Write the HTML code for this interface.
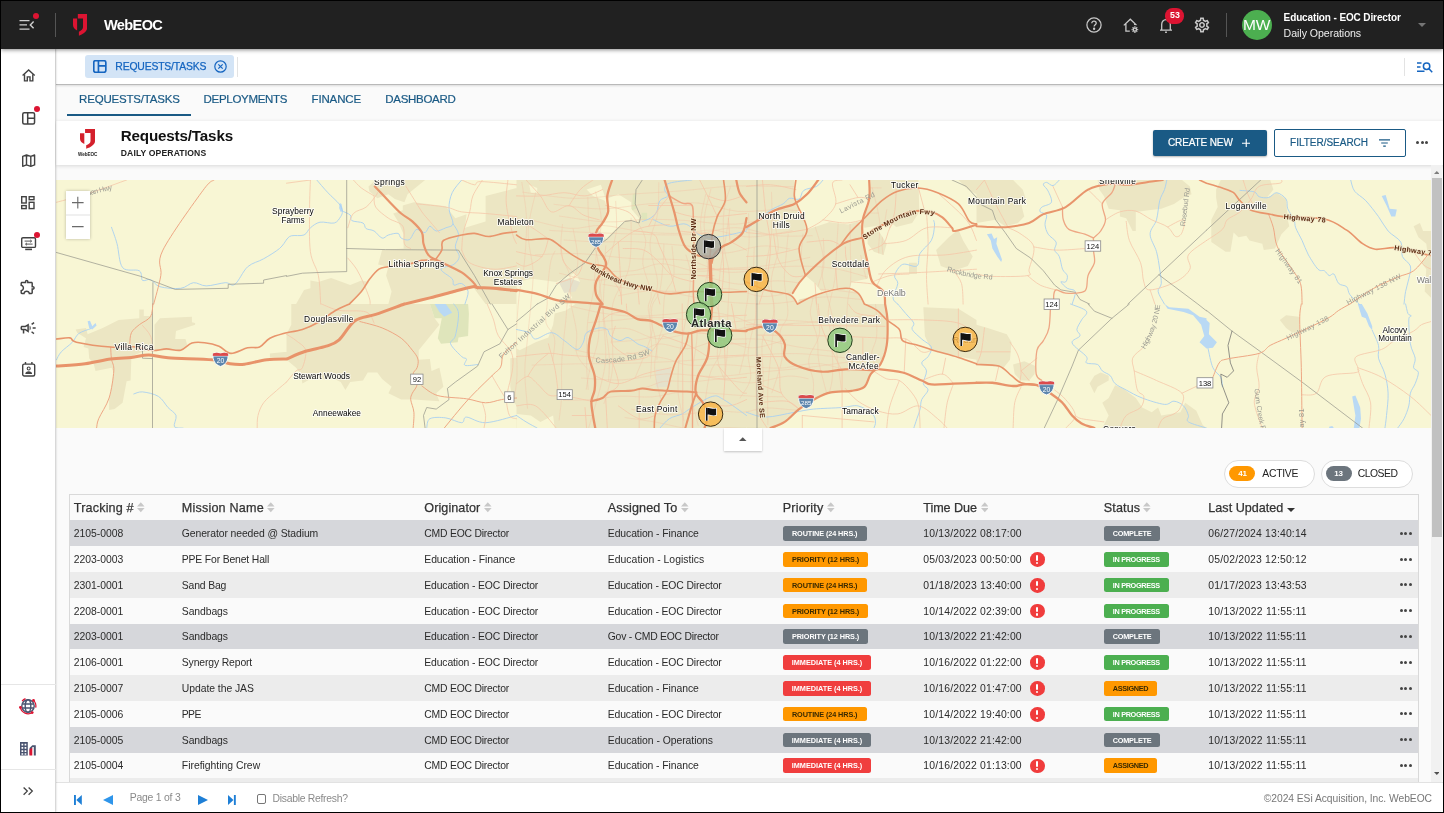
<!DOCTYPE html>
<html lang="en">
<head>
<meta charset="utf-8">
<title>WebEOC - Requests/Tasks</title>
<style>
*{box-sizing:border-box;margin:0;padding:0}
html,body{width:1444px;height:813px;overflow:hidden;background:#000;font-family:"Liberation Sans",sans-serif;}
#app{position:absolute;left:1px;top:1px;width:1442px;height:811px;background:#fafafa;overflow:hidden;will-change:transform}
.abs{position:absolute}
/* top bar */
#topbar{position:absolute;left:0;top:0;width:1442px;height:47.5px;background:#212121;z-index:20;box-shadow:0 1px 4px rgba(0,0,0,.45)}
#topbar .brand{position:absolute;left:103px;top:13.5px;font-size:14.6px;line-height:20px;color:#fff;font-weight:bold;letter-spacing:-0.66px;white-space:nowrap}
#topbar .vdiv{position:absolute;width:1px;background:#555;}
#avatar{position:absolute;left:1240.5px;top:8.5px;width:30px;height:30px;border-radius:50%;background:#4caf50;color:#fff;font-size:15.5px;line-height:30px;text-align:center;letter-spacing:-0.3px}
#uname{position:absolute;left:1282.6px;top:10.2px;letter-spacing:-0.12px;font-size:10px;line-height:14px;font-weight:bold;color:#fff;white-space:nowrap}
#urole{position:absolute;left:1282.6px;top:25px;letter-spacing:-0.05px;font-size:10.6px;line-height:14px;color:#eee;white-space:nowrap}
#nbadge{position:absolute;left:1164.3px;top:7.4px;width:19.2px;height:15.2px;border-radius:7.6px;background:#dc1432;color:#fff;font-size:8.8px;font-weight:bold;line-height:15.4px;text-align:center}
/* sidebar */
#sidebar{position:absolute;left:0;top:47px;width:54.2px;height:764px;background:#fff;z-index:10;box-shadow:1px 0 2px rgba(0,0,0,.2)}
#sidebar svg{position:absolute;overflow:visible}
.rdot{position:absolute;width:6px;height:6px;border-radius:50%;background:#dc1432}
.shr{position:absolute;left:0;width:54.5px;height:1px;background:#e6e6e6}
/* tab bar */
#tabbar{position:absolute;left:54.5px;top:47px;width:1388px;height:36.8px;background:#fff;border-bottom:1px solid #b9b9b9;z-index:5;box-shadow:0 1px 2px rgba(0,0,0,.12)}
#chip{position:absolute;left:29.8px;top:6.8px;width:148.7px;height:23px;border-radius:3px;background:#d3e4f6}
#chip .t{position:absolute;left:30px;top:5px;font-size:10.4px;line-height:14px;color:#1565c0;white-space:nowrap;letter-spacing:-0.17px;-webkit-text-stroke:.25px #1565c0}
/* subnav */
#subnav{position:absolute;left:54.5px;top:84px;width:1388px;height:36px;background:#fafafa}
#subnav .tab{position:absolute;top:6px;font-size:11.5px;line-height:16px;color:#1a5a85;white-space:nowrap;-webkit-text-stroke:.2px #1a5a85}
#subnav .ul{position:absolute;left:11.3px;top:29.2px;width:124px;height:1.4px;background:#1a5a85}
/* header card */
#hcard{position:absolute;left:54.5px;top:120.3px;width:1388px;height:43.5px;background:#fff;box-shadow:0 1px 4px rgba(0,0,0,.14);z-index:3}
#hcard .title{position:absolute;left:65.2px;top:4.5px;font-size:15.2px;line-height:20px;font-weight:bold;color:#111;white-space:nowrap;letter-spacing:-0.16px}
#hcard .sub{position:absolute;left:65.2px;top:25.8px;font-size:8.6px;line-height:12px;font-weight:bold;color:#222;white-space:nowrap;letter-spacing:.14px}
#btnNew{position:absolute;left:1097.5px;top:8.7px;width:114px;height:26px;border-radius:2px;background:#1a5a85;color:#fff;box-shadow:0 1px 2px rgba(0,0,0,.3)}
#btnNew .t,#btnFil .t{position:absolute;left:15px;top:6px;font-size:10px;line-height:14px;white-space:nowrap;letter-spacing:-0.12px}
#btnNew .t{-webkit-text-stroke:.2px #fff}
#btnFil{position:absolute;left:1218.6px;top:7.7px;width:132px;height:27.8px;border-radius:2px;background:#fff;border:1px solid #1a5a85;color:#1a5a85}
#btnFil .t{left:15px;top:6.3px;letter-spacing:-0.02px;-webkit-text-stroke:.2px #1a5a85}
/* content */
#content{position:absolute;left:54.5px;top:164px;width:1376px;height:617px;background:#fafafa}
#map{position:absolute;left:54.5px;top:179px;width:1375.5px;height:248px;background:#f9f7d4;overflow:hidden}
#zoomctl{position:absolute;left:65.2px;top:190px;width:24px;height:48px;background:#fff;box-shadow:0 0 3px rgba(0,0,0,.25);z-index:4}
#collapse{position:absolute;left:723px;top:427px;width:37.8px;height:22.5px;background:#fff;box-shadow:0 1px 2px rgba(0,0,0,.22);z-index:4}
.pill{position:absolute;top:459px;height:28px;border-radius:14px;background:#fff;border:1px solid #ddd}
.pill .n{position:absolute;left:4px;top:5.1px;width:26px;height:15px;border-radius:7.5px;color:#fff;font-size:8px;font-weight:bold;letter-spacing:-.2px;line-height:15.4px;text-align:center}
.pill .t{position:absolute;left:36.5px;top:5.5px;font-size:10.4px;line-height:14px;color:#222;white-space:nowrap}
/* table */
#tbl{position:absolute;left:67.8px;top:493.2px;width:1350.7px;height:290px;border:1px solid #d9d9d9;border-bottom:none;background:#fafafa}
.th{position:absolute;top:4.7px;font-size:12.6px;line-height:16px;color:#333;white-space:nowrap;-webkit-text-stroke:.25px #333}
.sort{position:absolute;top:7.3px;width:7.6px;height:10.6px}
.row{position:absolute;left:0;width:1348.7px;height:25.8px;font-size:10.4px;line-height:25.8px;color:#2b2b2b}
.row span{position:absolute;top:.8px;white-space:nowrap}
.r-d{background:#d6d7db}.r-w{background:#fafafa}.r-g{background:#ececec}
.c1{left:4px}.c2{left:112px}.c3{left:354.5px}.c4{left:538px}.c6{left:853.5px}.c8{left:1138.5px}
.bdg{position:absolute;top:5.8px;height:14.7px;border-radius:2.5px;font-size:7.3px;line-height:15.7px;font-weight:bold;text-align:center;white-space:nowrap;letter-spacing:-0.1px}
.p{left:713px}.s{left:1034px}
.gy{background:#6c757d;color:#fff}.or{background:#ff9800;color:#3a2a00}.rd{background:#f03e3e;color:#fff}.gn{background:#4caf50;color:#fff}
.al{position:absolute;left:960.2px;top:6px;width:14.6px;height:14.6px;border-radius:50%;background:#f03c3c}
.al:before{content:"";position:absolute;left:6.3px;top:2.8px;width:2px;height:5.6px;background:#fff;border-radius:1px}
.al:after{content:"";position:absolute;left:6.2px;top:9.6px;width:2.2px;height:2.2px;background:#fff;border-radius:50%}
.dots{position:absolute;left:1330px;top:11.4px;width:13px;height:3px}
.dots i,.dots:before,.dots:after{content:"";position:absolute;top:0;width:3px;height:3px;border-radius:50%;background:#444}
.dots:before{left:0}.dots i{left:4.6px}.dots:after{left:9.2px}
/* scrollbar */
#sb{position:absolute;left:1430px;top:164px;width:11.300px;height:617px;background:#f1f1f1;z-index:4}
#sb .thumb{position:absolute;left:.5px;top:13px;width:10.3px;height:359px;background:#c1c1c1}
/* footer */
#footer{position:absolute;left:54.5px;top:781px;width:1388px;height:30px;background:#fff;border-top:1px solid #e2e2e2;z-index:6}
#footer .pg{position:absolute;left:74.2px;top:8px;letter-spacing:-0.21px;font-size:10.4px;line-height:14px;color:#8a8a8a;white-space:nowrap}
#footer .dr{position:absolute;left:217.1px;top:8.9px;letter-spacing:-0.29px;font-size:10.4px;line-height:14px;color:#8a8a8a;white-space:nowrap}
#footer .cb{position:absolute;left:201px;top:11px;width:9.5px;height:9.5px;border:1px solid #767676;border-radius:2px;background:#fff}
#footer .cp{position:absolute;right:11.5px;top:9px;letter-spacing:-0.05px;font-size:10.3px;line-height:14px;color:#777;white-space:nowrap}
</style>
</head>
<body>
<div id="app">

<!-- TOPBAR -->
<div id="topbar">
  <svg class="abs" style="left:18px;top:18px" width="16" height="12" viewBox="0 0 16 12" fill="none" stroke="#d0d0d0" stroke-width="1.3"><path d="M0.5 1.6h10M0.5 5.9h7.5M0.5 10.2h10"/><path d="M14.6 2.6L11.3 5.9l3.3 3.3" stroke-width="1.4"/></svg>
  <div class="rdot" style="left:31.5px;top:12px;width:6.4px;height:6.4px"></div>
  <div class="vdiv" style="left:54px;top:12px;height:24px"></div>
  <svg class="abs" style="left:72px;top:13px" width="14.3" height="22" preserveAspectRatio="none" viewBox="0 0 16 23"><path d="M5.4 0H16v14.2c0 3.6-4.2 6.9-9.4 8.6V18.6c2.7-1 4.6-2.6 4.6-4.9V4.6H5.4z" fill="#dc1432"/><path d="M0 4.8h4.6v12.4C2 16.1 0 14.2 0 11.6z" fill="#dc1432"/></svg>
  <div class="brand">WebEOC</div>
  <!-- help -->
  <svg class="abs" style="left:1084.5px;top:16px" width="16" height="16" viewBox="0 0 16 16" fill="none" stroke="#c8c8c8" stroke-width="1.25"><circle cx="8" cy="8" r="7.1"/><path d="M5.8 6.3c0-1.3 1-2.1 2.2-2.1s2.2.8 2.2 2c0 1.5-2.1 1.7-2.1 3.4" stroke-width="1.3"/><circle cx="8.1" cy="11.7" r=".55" fill="#c8c8c8"/></svg>
  <!-- home gear -->
  <svg class="abs" style="left:1122px;top:16.500px" width="17" height="16" viewBox="0 0 17 16" fill="none" stroke="#c8c8c8" stroke-width="1.300"><path d="M.8 7.400L7.300 1.200l6.200 5.900M2.900 5.700V13.200H6.800M11.700 5.600V7"/><circle cx="11.900" cy="11.600" r="1.700" stroke-width="1.500"/><path d="M11.900 8.300v1M11.900 13.900v1M8.600 11.600h1M14.200 11.600h1M9.600 9.300l.7.700M13.500 13.200l.7.700M14.200 9.300l-.7.700M10.300 13.200l-.7.700" stroke-width="1.300"/></svg>
  <!-- bell -->
  <svg class="abs" style="left:1158px;top:15.5px" width="14" height="17" viewBox="0 0 14 17" fill="none" stroke="#c8c8c8" stroke-width="1.3"><path d="M1 13.2h12M2.7 13V7.4C2.7 4.6 4.5 2.6 7 2.6s4.3 2 4.3 4.8V13"/><path d="M6.1 15.3h1.8" stroke-width="1.6"/></svg>
  <div id="nbadge">53</div>
  <!-- gear -->
  <svg class="abs" style="left:1192px;top:15px" width="18" height="18" viewBox="0 0 24 24" fill="#c8c8c8"><path d="M19.43 12.98c.04-.32.07-.64.07-.98 0-.34-.03-.66-.07-.98l2.11-1.65c.19-.15.24-.42.12-.64l-2-3.46c-.09-.16-.26-.25-.44-.25-.06 0-.12.01-.17.03l-2.49 1c-.52-.4-1.08-.73-1.69-.98l-.38-2.65C14.46 2.18 14.25 2 14 2h-4c-.25 0-.46.18-.49.42l-.38 2.65c-.61.25-1.17.59-1.69.98l-2.49-1c-.06-.02-.12-.03-.18-.03-.17 0-.34.09-.43.25l-2 3.46c-.13.22-.07.49.12.64l2.11 1.65c-.04.32-.07.65-.07.98 0 .33.03.66.07.98l-2.11 1.65c-.19.15-.24.42-.12.64l2 3.46c.09.16.26.25.44.25.06 0 .12-.01.17-.03l2.49-1c.52.4 1.08.73 1.69.98l.38 2.65c.03.24.24.42.49.42h4c.25 0 .46-.18.49-.42l.38-2.65c.61-.25 1.17-.59 1.69-.98l2.49 1c.06.02.12.03.18.03.17 0 .34-.09.43-.25l2-3.46c.12-.22.07-.49-.12-.64l-2.11-1.65zm-1.98-1.71c.04.31.05.52.05.73 0 .21-.02.43-.05.73l-.14 1.13.89.7 1.08.84-.7 1.21-1.27-.51-1.04-.42-.9.68c-.43.32-.84.56-1.25.73l-1.06.43-.16 1.13-.2 1.35h-1.4l-.19-1.35-.16-1.13-1.06-.43c-.43-.18-.83-.41-1.23-.71l-.91-.7-1.06.43-1.27.51-.7-1.21 1.08-.84.89-.7-.14-1.13c-.03-.31-.05-.54-.05-.74s.02-.43.05-.73l.14-1.13-.89-.7-1.08-.84.7-1.21 1.27.51 1.04.42.9-.68c.43-.32.84-.56 1.25-.73l1.06-.43.16-1.13.2-1.35h1.39l.19 1.35.16 1.13 1.06.43c.43.18.83.41 1.23.71l.91.7 1.06-.43 1.27-.51.7 1.21-1.07.85-.89.7.14 1.13zM12 8c-2.21 0-4 1.79-4 4s1.790 4 4 4 4-1.790 4-4-1.790-4-4-4zm0 6c-1.100 0-2-.9-2-2s.9-2 2-2 2 .9 2 2-.9 2-2 2z"/></svg>
  <div class="vdiv" style="left:1225px;top:12px;height:24px"></div>
  <div id="avatar">MW</div>
  <div id="uname">Education - EOC Director</div>
  <div id="urole">Daily Operations</div>
  <svg class="abs" style="left:1416.5px;top:22px" width="8" height="4" viewBox="0 0 8 4"><path d="M0 0h8L4 4z" fill="#757575"/></svg>
</div>

<!-- SIDEBAR -->
<div id="sidebar">
  <svg style="left:20.6px;top:21.4px" width="13.3" height="12.6" viewBox="0 0 13.3 12.6" fill="none" stroke="#424242" stroke-width="1.4" stroke-linejoin="miter"><path d="M.6 6.5L6.65 1l6.05 5.500"/><path d="M2.500 5.300V11.900H5.300V7.900H8V11.900H10.800V5.300"/></svg>
  <svg style="left:20.6px;top:63.9px" width="13.3" height="12.8" viewBox="0 0 13.3 12.8" fill="none" stroke="#424242" stroke-width="1.5"><rect x=".75" y=".75" width="11.800" height="11.300" rx="1.500"/><path d="M5.700 .75v11.300M5.700 6.200h6.800"/></svg>
  <div class="rdot" style="left:33.1px;top:57.9px"></div>
  <svg style="left:20.6px;top:105.6px" width="13.3" height="13.3" viewBox="0 0 13.3 13.3" fill="none" stroke="#424242" stroke-width="1.4" stroke-linejoin="round"><path d="M.7 2.400L4.500 1l4.300 1.400L12.600 1v9.900l-3.800 1.400-4.300-1.400L.7 12.300zM4.500 1v9.900M8.800 2.400v9.900"/></svg>
  <svg style="left:20.3px;top:147.6px" width="13.700" height="13.300" viewBox="0 0 13.700 13.300" fill="none" stroke="#424242" stroke-width="1.400"><rect x=".7" y=".7" width="4.500" height="6.300"/><rect x="8.200" y=".7" width="4.800" height="3"/><rect x=".7" y="9.600" width="4.500" height="3"/><rect x="8.200" y="6.300" width="4.800" height="6.300"/></svg>
  <svg style="left:19.5px;top:189.3px" width="15.200" height="13.300" viewBox="0 0 15.200 13.300" fill="none" stroke="#424242" stroke-width="1.400"><rect x=".7" y=".7" width="13.800" height="9.700" rx="1.200"/><path d="M4.200 12.400h6.800" stroke-width="1.600"/><path d="M3.600 4.100h7M9.300 2.900l1.300 1.200-1.300 1.200M11.600 7.100h-7M5.900 5.900L4.600 7.100l1.300 1.200" stroke-width=".9"/></svg>
  <div class="rdot" style="left:33.1px;top:184.100px"></div>
  <svg style="left:18.3px;top:229.600px" width="17.600" height="17.600" viewBox="0 0 24 24" fill="#424242"><path d="M10.500 4.500c.28 0 .5.22.5.5v2h6v6h2c.28 0 .5.22.5.5s-.22.5-.5.5h-2v6h-2.120c-.68-1.750-2.390-3-4.380-3s-3.700 1.250-4.380 3H4v-2.120c1.750-.68 3-2.390 3-4.380 0-1.990-1.240-3.700-2.990-4.380L4 7h6V5c0-.28.22-.5.5-.5m0-2C9.120 2.500 8 3.620 8 5H4c-1.100 0-1.990.9-1.990 2v3.800h.29c1.490 0 2.700 1.210 2.700 2.700s-1.210 2.700-2.700 2.700H2V20c0 1.100.9 2 2 2h3.800v-.3c0-1.490 1.210-2.700 2.700-2.700s2.700 1.210 2.700 2.700v.3H17c1.100 0 2-.9 2-2v-4c1.380 0 2.500-1.120 2.500-2.500S20.380 11 19 11V7c0-1.100-.9-2-2-2h-4c0-1.380-1.120-2.500-2.500-2.500z"/></svg>
  <svg style="left:18px;top:270.800px" width="18.200" height="18.200" viewBox="0 0 24 24" fill="#424242"><path d="M18 11v2h4v-2h-4zm-2 6.610c.96.71 2.210 1.650 3.200 2.390.4-.53.8-1.070 1.200-1.600-.99-.74-2.240-1.680-3.200-2.400-.4.54-.8 1.080-1.200 1.610zM20.400 5.600c-.4-.53-.8-1.070-1.200-1.600-.99.74-2.240 1.680-3.200 2.400.4.53.8 1.070 1.200 1.600.96-.72 2.210-1.650 3.200-2.400zM4 9c-1.100 0-2 .9-2 2v2c0 1.100.9 2 2 2h1v4h2v-4h1l5 3V6L8 9H4zm5.030 1.710L11 9.530v4.940l-1.970-1.180-.48-.29H4v-2h4.550l.48-.29zM15.500 12c0-1.330-.58-2.530-1.500-3.350v6.690c.92-.81 1.500-2.010 1.500-3.340z"/></svg>
  <svg style="left:20.6px;top:314.100px" width="13.400" height="14.700" viewBox="0 0 13.400 14.700" fill="none" stroke="#424242" stroke-width="1.400"><rect x=".7" y="2.100" width="12" height="11.900" rx="1.500"/><path d="M3.500 0v2.100M9.900 0v2.100"/><circle cx="6.700" cy="6.500" r="1.500" stroke-width="1.100"/><path d="M3.300 11.900c0-1.900 1.500-2.700 3.400-2.700s3.400.8 3.400 2.700z" fill="#424242" stroke="none"/></svg>
  <div class="shr" style="top:636.300px"></div>
  <svg style="left:17.800px;top:648.700px" width="18" height="18" viewBox="0 0 18 18" fill="none" stroke="#4a5470" stroke-width="1.400"><circle cx="9" cy="9" r="6.200"/><ellipse cx="9" cy="9" rx="2.800" ry="6.200"/><path d="M3.200 7h11.600M3.200 11h11.600"/><path d="M1.400 10.400A7.800 7.800 0 0 0 13.400 15.400" stroke="#dc1432" stroke-width="1.200"/><path d="M14.500 3.400A7.800 7.800 0 0 1 16.700 10.600" stroke="#dc1432" stroke-width="1.200"/><path d="M3.100 4.100A7.800 7.800 0 0 1 6.500 1.600" stroke="#dc1432" stroke-width="1.200"/><circle cx="1.400" cy="10.400" r="1.400" fill="#dc1432" stroke="none"/><circle cx="14.500" cy="3.400" r="1.400" fill="#dc1432" stroke="none"/><circle cx="13.200" cy="15.600" r="1.400" fill="#dc1432" stroke="none"/></svg>
  <svg style="left:19.100px;top:693.700px" width="16" height="13.500" viewBox="0 0 16 13.500"><rect x="0" y="0" width="7.800" height="13.500" fill="#4a5470"/><path d="M1.500 1.800h1.700v1.700H1.500zM4.600 1.800h1.700v1.700H4.600zM1.500 5h1.700v1.700H1.500zM4.600 5h1.700v1.700H4.600zM1.500 8.200h1.700v1.700H1.500zM4.600 8.200h1.700v1.700H4.600zM1.500 11.200h1.700v1.500H1.500zM4.600 11.200h1.700v1.500H4.600z" fill="#fff"/><path d="M9.500 13.500V6l2.800-2.800h3.500v10.300h-2V5h-1.300z" fill="#4a5470"/><path d="M9.500 7.400l2.800-1.700v7.800H9.500z" fill="#dc1432"/></svg>
  <div class="shr" style="top:721.200px"></div>
  <svg style="left:21.900px;top:739.100px" width="10.300" height="8.200" viewBox="0 0 10.300 8.200" fill="none" stroke="#424242" stroke-width="1.300"><path d="M.6 .5l3.700 3.600L.6 7.700M5.600 .5l3.700 3.600-3.700 3.600"/></svg>
</div>

<!-- TABBAR -->
<div id="tabbar">
  <div id="chip">
    <svg class="abs" style="left:7.8px;top:5px" width="13.6" height="13" viewBox="0 0 13 12.5" fill="none" stroke="#1565c0" stroke-width="1.6"><rect x=".7" y=".7" width="11.6" height="11.1" rx="1.6"/><path d="M5.2 .7v11.1M5.2 5.6h7.1"/></svg>
    <div class="t">REQUESTS/TASKS</div>
    <svg class="abs" style="left:128.8px;top:5px" width="13" height="13" viewBox="0 0 13 13" fill="none" stroke="#1565c0" stroke-width="1.2"><circle cx="6.5" cy="6.5" r="5.7"/><path d="M4.3 4.3l4.4 4.4M8.7 4.3L4.3 8.7"/></svg>
  </div>
  <div class="abs" style="left:181.5px;top:9px;width:1px;height:20px;background:#e3e3e3"></div>
  <div class="abs" style="left:1348px;top:10px;width:1px;height:18px;background:#e3e3e3"></div>
  <svg class="abs" style="left:1361.5px;top:13.6px" width="16" height="11" viewBox="0 0 16 11" fill="none" stroke="#1565c0" stroke-width="1.5"><path d="M0 1h4.5M0 5h3.5M0 9.2h7.5"/><circle cx="9.6" cy="4.3" r="3.2"/><path d="M12 6.8l3.2 3.4"/></svg>
</div>

<!-- SUBNAV -->
<div id="subnav">
  <div class="tab" style="left:23.6px;letter-spacing:-0.2px">REQUESTS/TASKS</div>
  <div class="tab" style="left:148px;letter-spacing:-0.29px">DEPLOYMENTS</div>
  <div class="tab" style="left:256px;letter-spacing:-0.14px">FINANCE</div>
  <div class="tab" style="left:329.8px;letter-spacing:-0.29px">DASHBOARD</div>
  <div class="ul"></div>
</div>

<!-- HEADER CARD -->
<div id="hcard">
  <svg class="abs" style="left:24.5px;top:8px" width="15" height="20" viewBox="0 0 16 23" preserveAspectRatio="none"><path d="M5.4 0H16v14.2c0 3.6-4.2 6.900-9.400 8.600V18.600c2.700-1 4.600-2.600 4.600-4.900V4.600H5.400z" fill="#d4202c"/><path d="M0 4.800h4.600v12.400C2 16.100 0 14.200 0 11.600z" fill="#d4202c"/></svg>
  <div class="abs" style="left:22.500px;top:31px;font-size:4.600px;line-height:6px;font-weight:bold;color:#222;letter-spacing:-0.050px">WebEOC</div>
  <div class="title">Requests/Tasks</div>
  <div class="sub">DAILY OPERATIONS</div>
  <div id="btnNew"><div class="t">CREATE NEW</div>
    <svg class="abs" style="left:88.500px;top:9px" width="8.500" height="8.500" viewBox="0 0 9 9" stroke="#fff" stroke-width="1.200"><path d="M4.500 0v9M0 4.500h9"/></svg></div>
  <div id="btnFil"><div class="t">FILTER/SEARCH</div>
    <svg class="abs" style="left:103.500px;top:9.500px" width="11" height="8" viewBox="0 0 11 8" stroke="#1a5a85" stroke-width="1.200"><path d="M0 .8h11M2.200 4h6.600M4.200 7.200h2.600"/></svg></div>
  <div class="abs" style="left:1360.5px;top:19.700px;width:12px;height:3px"><div class="dots" style="left:0;top:0"><i></i></div></div>
</div>

<!-- CONTENT -->
<div id="content"></div>
<div id="map"><svg width="1375.5" height="248" viewBox="55.5 180 1375.5 248" style="position:absolute;left:0;top:0;font-family:'Liberation Sans',sans-serif">
<rect x="55" y="179" width="1377" height="250" fill="#f8f6d4"/>
<path d="M75.1 329.5 L85.5 327.9 L87.1 334.3 L102.2 327.9 L118.1 319.9 L138.8 318.3 L138.8 309.6 L143.3 309.6 L143.3 315.9 L151.6 315.9 L151.6 350.2 L142.0 351.8 L130.9 356.6 L130.1 380.5 L126.1 381.3 L122.1 402.8 L114.1 409.1 L108.6 409.9 L108.6 399.6 L113.3 372.5 L111.0 367.7 L95.0 370.9 L93.4 364.5 L88.7 358.2 L87.9 348.6 L83.1 347.0 L85.5 338.2 L76.7 332.7Z M154.0 324.7 L159.5 318.3 L191.4 316.7 L191.4 322.3 L194.6 323.1 L194.6 324.7 L175.5 331.1 L174.7 339.0 L185.0 339.0 L186.6 344.6 L180.2 350.2 L154.0 350.2Z M269.4 353.4 L286.0 351.8 L286.0 357.4 L269.4 357.4Z M368.0 186.4 L375.2 180.0 L424.6 180.0 L407.1 194.3 L403.9 202.3 L394.3 199.1 L387.9 194.3 L376.8 198.3 L368.8 191.2Z M402.3 205.5 L413.4 202.3 L445.3 206.3 L454.8 218.2 L466.0 214.2 L464.4 227.8 L485.1 221.4 L485.1 195.9 L516.0 188.0 L516.0 304.1 L485.1 304.1 L472.4 286.7 L451.7 291.5 L429.4 297.9 L403.9 304.1 L387.9 304.1 L391.1 291.5 L385.6 275.6 L387.9 266.8 L377.6 264.4 L381.6 250.1 L403.1 248.5 L403.1 234.2 L397.5 221.4 L392.7 213.5 L402.3 210.3Z M295.6 304.1 L303.5 289.9 L309.9 288.3 L309.9 280.4 L317.9 281.9 L330.6 278.0 L349.7 285.1 L360.9 280.4 L368.8 281.9 L360.9 291.5 L348.9 304.1Z M290.8 304.0 L429.4 304.0 L434.1 318.3 L438.9 324.7 L418.2 350.2 L418.2 359.8 L429.4 359.0 L431.0 370.9 L438.9 367.7 L442.9 386.8 L435.7 393.2 L438.9 401.2 L413.4 399.6 L400.7 399.6 L387.9 393.2 L391.1 386.8 L381.6 378.9 L376.8 372.5 L367.2 372.5 L362.5 380.5 L349.7 382.1 L344.9 390.0 L340.2 382.1 L333.8 378.9 L309.9 378.9 L301.9 383.6 L300.3 374.1 L295.6 367.7 L286.0 359.8 L286.0 334.3 L290.8 324.7Z M509.8 358.2 L516.0 357.4 L516.0 405.9 L512.2 399.6 L509.8 386.8Z M516.0 180.0 L746.0 180.0 L746.0 304.1 L516.0 304.1Z M516.0 304.0 L746.0 304.0 L746.0 428.1 L516.0 428.1Z M746.0 180.0 L793.8 180.0 L795.4 200.7 L806.5 229.4 L798.6 248.5 L804.9 275.6 L790.6 293.1 L797.0 304.1 L746.0 304.1Z M806.5 229.4 L828.8 222.2 L847.9 224.6 L857.5 221.4 L862.3 227.8 L863.9 243.7 L868.7 269.2 L867.1 278.8 L851.1 281.9 L849.5 288.3 L835.2 288.3 L820.9 291.5 L814.5 283.5 L804.9 275.6 L798.6 248.5Z M797.0 304.1 L798.6 299.5 L844.8 288.3 L857.5 293.1 L863.9 304.1Z M870.2 180.0 L918.0 180.0 L918.8 211.9 L911.7 223.0 L895.7 227.0 L889.4 221.4 L884.6 224.6 L863.9 227.8 L862.3 219.8 L868.7 203.9Z M867.1 232.6 L878.2 231.0 L886.2 243.7 L883.0 254.9 L873.4 251.7 L867.1 243.7Z M935.6 250.1 L948.3 237.3 L957.9 229.4 L962.6 240.5 L972.2 256.5 L967.4 266.0 L953.1 270.8 L940.3 266.0Z M908.5 262.8 L916.4 262.8 L916.4 274.0 L908.5 274.0Z M957.9 180.0 L976.0 180.0 L976.0 194.3 L967.4 189.6Z M746.0 304.0 L884.6 304.0 L887.0 319.9 L886.2 345.4 L879.8 364.5 L870.2 374.1 L863.9 386.8 L851.1 390.8 L830.4 392.4 L816.1 398.0 L798.6 409.1 L784.2 421.9 L774.7 428.1 L746.0 428.1Z M922.8 307.2 L957.9 308.8 L976.0 319.9 L976.0 359.8 L957.9 356.6 L930.8 350.2 L924.4 335.9Z M976.0 180.0 L1012.6 180.0 L1022.2 189.6 L1025.4 199.1 L1020.6 203.9 L1023.8 216.6 L1017.4 223.0 L1004.7 226.2 L995.1 219.8 L976.0 223.0Z M1097.1 180.0 L1181.5 180.0 L1189.4 186.4 L1191.0 194.3 L1183.1 197.5 L1173.5 203.9 L1160.8 208.7 L1148.0 210.3 L1135.3 211.9 L1135.3 231.0 L1132.1 231.0 L1125.7 218.2 L1119.4 216.6 L1119.4 210.3 L1108.2 208.7 L1103.4 195.9 L1098.7 189.6Z M976.0 324.7 L987.2 327.9 L1006.3 334.3 L1011.0 342.2 L1009.5 359.8 L1003.1 367.7 L976.0 364.5Z M1012.6 364.5 L1023.8 361.3 L1034.9 366.1 L1034.1 374.1 L1028.6 380.5 L1020.6 380.5 L1014.2 374.1Z M1101.8 428.1 L1108.2 415.5 L1101.8 402.8 L1108.2 398.0 L1114.6 385.2 L1122.5 388.4 L1135.3 398.0 L1141.7 407.5 L1151.2 412.3 L1157.6 407.5 L1160.8 415.5 L1179.9 412.3 L1184.7 402.8 L1195.8 410.7 L1202.2 425.1 L1206.0 428.1Z M1089.1 383.6 L1093.9 375.7 L1100.2 372.5 L1108.2 375.7 L1108.2 380.5 L1097.1 386.8 L1093.9 393.2Z M1215.6 189.6 L1220.3 180.0 L1269.7 180.0 L1272.9 189.6 L1266.5 197.5 L1276.1 192.7 L1285.6 199.1 L1287.2 219.8 L1288.8 226.2 L1280.9 234.2 L1274.5 248.5 L1263.3 250.1 L1261.8 243.7 L1249.0 240.5 L1245.8 235.8 L1237.9 237.3 L1233.1 232.6 L1229.9 251.7 L1225.1 251.7 L1210.8 242.1 L1210.8 219.8 L1217.2 207.1 L1215.6 197.5Z M1413.1 226.2 L1419.4 223.0 L1422.6 231.0 L1430.6 231.0 L1430.6 297.9 L1424.2 291.5 L1425.8 269.2 L1421.0 262.8 L1427.4 256.5 L1425.8 243.7 L1417.9 237.3Z M1279.3 319.9 L1285.6 315.2 L1298.4 316.7 L1299.2 331.1 L1292.0 332.7 L1285.6 327.9Z" fill="#ece6c3"/>
<path d="M586.1 189.6 L600.4 184.8 L605.2 199.1 L617.9 194.3 L630.7 202.3 L630.7 208.7 L638.7 218.2 L637.1 223.0 L625.9 220.6 L614.8 229.4 L605.2 238.9 L602.0 234.2 L597.2 229.4 L605.2 219.8 L606.8 208.7 L604.4 200.7 L592.5 195.9Z M516.0 281.9 L531.9 278.8 L555.8 281.9 L574.9 272.4 L579.7 281.9 L568.6 291.5 L571.8 297.9 L555.8 304.1 L516.0 304.1Z M528.7 184.8 L536.7 188.0 L536.7 192.7 L530.3 192.7Z M516.0 304.0 L574.9 304.0 L565.4 310.4 L554.2 313.6 L552.6 324.7 L547.9 337.5 L535.1 342.2 L519.2 350.2 L516.0 348.6Z M516.0 413.9 L530.3 415.5 L539.9 421.9 L552.6 415.5 L554.2 428.1 L516.0 428.1Z" fill="#f8f6d4"/>
<path d="M558.2 281.9 L568.6 278.0 L579.7 281.9 L574.9 291.5 L563.8 293.1Z M655.4 369.3 L670.5 368.5 L669.7 386.8 L655.4 387.6Z" fill="#e5e1cb"/>
<path d="M429.4 304.0 L467.6 304.0 L468.4 313.6 L467.6 335.9 L458.0 337.5 L457.2 342.2 L440.5 343.8 L437.3 338.2 L441.3 318.3 L434.1 318.3Z M632.3 194.3 L635.5 192.7 L635.5 208.7 L631.5 210.3Z M641.0 212.7 L646.6 212.7 L646.6 219.8 L641.0 219.8Z" fill="#dfe5bb"/>
<path d="M87.1 321.2 L89.5 320.7 L91.8 326.3 L95.0 323.1 L96.1 325.5 L91.8 329.5 L88.7 327.9Z M339.4 203.1 L341.0 203.9 L342.5 211.1 L340.2 211.9 L338.6 207.9Z M434.1 304.0 L445.3 304.0 L451.7 312.8 L443.7 316.7 L438.9 312.0Z M986.4 234.2 L991.1 233.4 L993.5 238.9 L996.7 237.3 L995.9 243.7 L1001.5 259.6 L1000.7 262.0 L996.7 256.5 L991.9 248.5 L990.3 240.5Z M1164.0 304.0 L1168.7 307.2 L1187.9 308.8 L1199.0 316.7 L1206.0 318.3 L1206.0 348.6 L1199.0 342.2 L1203.8 335.9 L1200.6 324.7 L1192.6 315.2 L1183.1 312.0 L1167.1 308.8Z M1381.2 195.9 L1385.2 195.1 L1389.2 208.7 L1396.3 209.5 L1394.8 216.6 L1390.8 216.6 L1386.0 205.5Z M1206.0 319.9 L1209.2 323.1 L1208.4 334.3 L1216.4 342.2 L1212.4 347.8 L1206.0 348.6Z M1357.3 304.0 L1361.3 304.0 L1366.9 313.6 L1371.7 326.3 L1371.7 330.3 L1368.5 326.3 L1365.3 318.3 L1361.3 316.7Z M1351.7 396.4 L1354.9 395.6 L1359.7 407.5 L1360.5 418.7 L1358.9 428.1 L1353.3 428.1 L1354.9 415.5Z M1328.7 426.7 L1331.8 425.9 L1333.4 428.1 L1328.7 428.1Z" fill="#b9d9f4"/>
<clipPath id="uc"><path d="M75.1 329.5 L85.5 327.9 L87.1 334.3 L102.2 327.9 L118.1 319.9 L138.8 318.3 L138.8 309.6 L143.3 309.6 L143.3 315.9 L151.6 315.9 L151.6 350.2 L142.0 351.8 L130.9 356.6 L130.1 380.5 L126.1 381.3 L122.1 402.8 L114.1 409.1 L108.6 409.9 L108.6 399.6 L113.3 372.5 L111.0 367.7 L95.0 370.9 L93.4 364.5 L88.7 358.2 L87.9 348.6 L83.1 347.0 L85.5 338.2 L76.7 332.7Z M154.0 324.7 L159.5 318.3 L191.4 316.7 L191.4 322.3 L194.6 323.1 L194.6 324.7 L175.5 331.1 L174.7 339.0 L185.0 339.0 L186.6 344.6 L180.2 350.2 L154.0 350.2Z M269.4 353.4 L286.0 351.8 L286.0 357.4 L269.4 357.4Z M368.0 186.4 L375.2 180.0 L424.6 180.0 L407.1 194.3 L403.9 202.3 L394.3 199.1 L387.9 194.3 L376.8 198.3 L368.8 191.2Z M402.3 205.5 L413.4 202.3 L445.3 206.3 L454.8 218.2 L466.0 214.2 L464.4 227.8 L485.1 221.4 L485.1 195.9 L516.0 188.0 L516.0 304.1 L485.1 304.1 L472.4 286.7 L451.7 291.5 L429.4 297.9 L403.9 304.1 L387.9 304.1 L391.1 291.5 L385.6 275.6 L387.9 266.8 L377.6 264.4 L381.6 250.1 L403.1 248.5 L403.1 234.2 L397.5 221.4 L392.7 213.5 L402.3 210.3Z M295.6 304.1 L303.5 289.9 L309.9 288.3 L309.9 280.4 L317.9 281.9 L330.6 278.0 L349.7 285.1 L360.9 280.4 L368.8 281.9 L360.9 291.5 L348.9 304.1Z M290.8 304.0 L429.4 304.0 L434.1 318.3 L438.9 324.7 L418.2 350.2 L418.2 359.8 L429.4 359.0 L431.0 370.9 L438.9 367.7 L442.9 386.8 L435.7 393.2 L438.9 401.2 L413.4 399.6 L400.7 399.6 L387.9 393.2 L391.1 386.8 L381.6 378.9 L376.8 372.5 L367.2 372.5 L362.5 380.5 L349.7 382.1 L344.9 390.0 L340.2 382.1 L333.8 378.9 L309.9 378.9 L301.9 383.6 L300.3 374.1 L295.6 367.7 L286.0 359.8 L286.0 334.3 L290.8 324.7Z M509.8 358.2 L516.0 357.4 L516.0 405.9 L512.2 399.6 L509.8 386.8Z M516.0 180.0 L746.0 180.0 L746.0 304.1 L516.0 304.1Z M516.0 304.0 L746.0 304.0 L746.0 428.1 L516.0 428.1Z M746.0 180.0 L793.8 180.0 L795.4 200.7 L806.5 229.4 L798.6 248.5 L804.9 275.6 L790.6 293.1 L797.0 304.1 L746.0 304.1Z M806.5 229.4 L828.8 222.2 L847.9 224.6 L857.5 221.4 L862.3 227.8 L863.9 243.7 L868.7 269.2 L867.1 278.8 L851.1 281.9 L849.5 288.3 L835.2 288.3 L820.9 291.5 L814.5 283.5 L804.9 275.6 L798.6 248.5Z M797.0 304.1 L798.6 299.5 L844.8 288.3 L857.5 293.1 L863.9 304.1Z M870.2 180.0 L918.0 180.0 L918.8 211.9 L911.7 223.0 L895.7 227.0 L889.4 221.4 L884.6 224.6 L863.9 227.8 L862.3 219.8 L868.7 203.9Z M867.1 232.6 L878.2 231.0 L886.2 243.7 L883.0 254.9 L873.4 251.7 L867.1 243.7Z M935.6 250.1 L948.3 237.3 L957.9 229.4 L962.6 240.5 L972.2 256.5 L967.4 266.0 L953.1 270.8 L940.3 266.0Z M908.5 262.8 L916.4 262.8 L916.4 274.0 L908.5 274.0Z M957.9 180.0 L976.0 180.0 L976.0 194.3 L967.4 189.6Z M746.0 304.0 L884.6 304.0 L887.0 319.9 L886.2 345.4 L879.8 364.5 L870.2 374.1 L863.9 386.8 L851.1 390.8 L830.4 392.4 L816.1 398.0 L798.6 409.1 L784.2 421.9 L774.7 428.1 L746.0 428.1Z M922.8 307.2 L957.9 308.8 L976.0 319.9 L976.0 359.8 L957.9 356.6 L930.8 350.2 L924.4 335.9Z M976.0 180.0 L1012.6 180.0 L1022.2 189.6 L1025.4 199.1 L1020.6 203.9 L1023.8 216.6 L1017.4 223.0 L1004.7 226.2 L995.1 219.8 L976.0 223.0Z M1097.1 180.0 L1181.5 180.0 L1189.4 186.4 L1191.0 194.3 L1183.1 197.5 L1173.5 203.9 L1160.8 208.7 L1148.0 210.3 L1135.3 211.9 L1135.3 231.0 L1132.1 231.0 L1125.7 218.2 L1119.4 216.6 L1119.4 210.3 L1108.2 208.7 L1103.4 195.9 L1098.7 189.6Z M976.0 324.7 L987.2 327.9 L1006.3 334.3 L1011.0 342.2 L1009.5 359.8 L1003.1 367.7 L976.0 364.5Z M1012.6 364.5 L1023.8 361.3 L1034.9 366.1 L1034.1 374.1 L1028.6 380.5 L1020.6 380.5 L1014.2 374.1Z M1101.8 428.1 L1108.2 415.5 L1101.8 402.8 L1108.2 398.0 L1114.6 385.2 L1122.5 388.4 L1135.3 398.0 L1141.7 407.5 L1151.2 412.3 L1157.6 407.5 L1160.8 415.5 L1179.9 412.3 L1184.7 402.8 L1195.8 410.7 L1202.2 425.1 L1206.0 428.1Z M1089.1 383.6 L1093.9 375.7 L1100.2 372.5 L1108.2 375.7 L1108.2 380.5 L1097.1 386.8 L1093.9 393.2Z M1215.6 189.6 L1220.3 180.0 L1269.7 180.0 L1272.9 189.6 L1266.5 197.5 L1276.1 192.7 L1285.6 199.1 L1287.2 219.8 L1288.8 226.2 L1280.9 234.2 L1274.5 248.5 L1263.3 250.1 L1261.8 243.7 L1249.0 240.5 L1245.8 235.8 L1237.9 237.3 L1233.1 232.6 L1229.9 251.7 L1225.1 251.7 L1210.8 242.1 L1210.8 219.8 L1217.2 207.1 L1215.6 197.5Z M1413.1 226.2 L1419.4 223.0 L1422.6 231.0 L1430.6 231.0 L1430.6 297.9 L1424.2 291.5 L1425.8 269.2 L1421.0 262.8 L1427.4 256.5 L1425.8 243.7 L1417.9 237.3Z M1279.3 319.9 L1285.6 315.2 L1298.4 316.7 L1299.2 331.1 L1292.0 332.7 L1285.6 327.9Z"/></clipPath>
<path d="M538.5 180.5 C545.2 180.3 564.6 180.1 579.0 179.3 C593.3 178.6 609.2 177.5 624.4 175.8 C639.7 174.2 654.6 169.6 670.5 169.4 C686.5 169.2 704.8 175.4 720.1 174.8 C735.5 174.1 746.9 166.1 762.5 165.5 C778.2 164.8 797.7 171.3 813.8 170.7 C829.9 170.2 851.4 163.5 859.0 162.0 M521.7 192.1 C530.5 193.1 557.5 198.0 574.5 198.4 C591.6 198.8 606.6 195.8 624.2 194.5 C641.8 193.3 662.6 192.3 680.3 190.9 C698.0 189.5 714.4 186.9 730.4 186.2 C746.3 185.4 758.8 186.2 776.1 186.4 C793.3 186.6 816.5 187.3 833.9 187.5 C851.4 187.8 873.1 187.9 881.0 187.9 M553.2 204.3 C561.3 205.1 585.8 209.0 601.9 208.9 C618.0 208.8 633.7 204.7 649.7 203.7 C665.8 202.7 683.5 201.8 698.1 203.1 C712.8 204.3 723.9 210.3 737.6 211.4 C751.2 212.4 765.7 209.4 780.3 209.7 C794.8 209.9 808.3 212.3 824.6 212.9 C841.0 213.4 869.3 213.0 878.2 213.1 M558.5 216.0 C566.3 217.0 590.7 221.4 605.1 221.9 C619.4 222.5 631.6 219.7 644.7 219.4 C657.9 219.2 669.0 219.6 683.9 220.4 C698.7 221.2 718.0 224.8 734.0 224.2 C750.0 223.7 765.5 217.4 779.6 217.0 C793.7 216.7 805.4 221.3 818.5 221.9 C831.6 222.4 851.6 220.5 858.2 220.2 M530.0 219.8 C536.5 221.3 557.0 227.4 569.0 228.4 C581.0 229.3 589.4 224.8 601.7 225.4 C614.1 226.0 629.6 230.6 643.0 231.9 C656.4 233.2 670.6 233.7 682.1 233.4 C693.7 233.1 701.1 229.5 712.3 230.1 C723.5 230.7 736.1 236.9 749.4 237.0 C762.7 237.0 785.0 231.6 792.1 230.6 M548.8 230.4 C553.9 230.7 567.6 231.5 579.5 232.1 C591.5 232.6 606.6 233.1 620.7 233.6 C634.9 234.1 651.7 234.8 664.3 234.9 C677.0 234.9 684.8 235.2 696.7 234.0 C708.6 232.8 722.5 227.4 735.6 227.7 C748.7 227.9 762.5 234.2 775.2 235.6 C788.0 236.9 806.0 235.7 812.1 235.7 M563.1 240.0 C568.7 240.3 585.5 241.6 596.8 241.9 C608.0 242.1 620.0 241.3 630.3 241.5 C640.6 241.8 648.4 242.6 658.6 243.5 C668.9 244.3 681.1 245.0 691.8 246.6 C702.5 248.2 711.4 253.2 723.0 253.1 C734.7 253.0 750.5 246.6 761.6 246.0 C772.7 245.3 785.0 248.5 789.7 249.0 M534.4 254.8 C541.9 254.6 563.5 253.1 579.8 253.7 C596.1 254.3 614.3 257.5 632.2 258.6 C650.1 259.7 671.2 258.3 687.1 260.6 C703.1 262.9 711.9 271.3 727.9 272.3 C743.8 273.3 765.5 267.3 783.0 266.6 C800.5 265.9 816.2 265.8 832.8 268.4 C849.3 270.9 873.9 279.7 882.2 281.9 M599.9 271.4 C605.5 271.2 623.4 271.9 633.6 270.6 C643.8 269.3 650.6 263.6 661.0 263.7 C671.4 263.8 685.2 270.4 696.0 271.2 C706.9 272.0 716.3 269.1 726.2 268.4 C736.1 267.7 746.7 267.6 755.5 266.8 C764.2 266.0 769.6 265.1 778.6 263.5 C787.7 262.0 804.6 258.4 809.7 257.3 M558.6 273.2 C564.6 274.4 582.9 280.1 595.1 280.3 C607.4 280.6 621.2 275.7 632.1 274.7 C643.1 273.7 650.0 274.3 660.8 274.4 C671.7 274.5 684.4 273.7 697.4 275.4 C710.4 277.0 725.4 283.3 738.9 284.2 C752.3 285.1 765.7 280.6 778.0 280.8 C790.4 281.0 807.0 284.7 812.8 285.5 M602.0 284.3 C607.9 285.1 624.1 288.3 637.1 289.5 C650.2 290.6 665.0 291.5 680.3 291.4 C695.5 291.2 714.8 287.8 728.7 288.7 C742.6 289.5 750.5 296.3 763.8 296.5 C777.2 296.7 795.5 290.6 808.8 289.8 C822.1 288.9 829.5 289.6 843.7 291.3 C857.8 293.1 885.3 298.8 893.6 300.3 M617.5 295.8 C623.8 295.0 640.5 290.4 654.9 290.9 C669.3 291.4 689.9 296.9 703.9 298.9 C717.9 300.9 726.5 302.3 738.8 303.0 C751.1 303.7 763.8 304.3 777.6 303.3 C791.4 302.3 808.7 297.8 821.7 297.0 C834.6 296.3 842.9 297.9 855.1 298.9 C867.3 299.9 888.2 302.4 894.8 303.1 M568.7 305.9 C574.5 307.1 592.5 311.7 603.4 313.4 C614.3 315.1 623.2 315.9 633.8 316.1 C644.4 316.3 656.0 315.2 666.9 314.4 C677.8 313.6 688.7 311.2 699.4 311.4 C710.0 311.6 720.9 313.5 730.7 315.8 C740.4 318.0 747.8 323.7 758.1 325.1 C768.3 326.5 786.4 324.3 792.1 324.1 M587.4 322.7 C592.1 322.3 605.1 321.2 615.6 320.3 C626.1 319.4 638.1 317.4 650.4 317.3 C662.7 317.3 677.7 319.1 689.3 320.0 C701.0 320.9 708.9 323.0 720.2 322.9 C731.5 322.8 746.1 319.9 757.3 319.5 C768.4 319.1 776.8 319.8 787.2 320.3 C797.5 320.8 813.9 322.1 819.3 322.5 M586.2 332.5 C592.7 331.8 613.2 327.4 625.1 328.4 C636.9 329.5 645.2 338.0 657.0 338.7 C668.9 339.4 685.1 332.6 696.3 332.6 C707.6 332.7 714.0 337.7 724.6 338.8 C735.3 339.9 748.3 338.0 760.3 339.3 C772.2 340.7 783.1 344.7 796.5 346.8 C809.8 349.0 833.2 351.2 840.5 352.1 M610.1 342.1 C615.0 341.7 627.9 341.3 639.0 339.7 C650.2 338.0 663.7 333.3 677.2 332.3 C690.7 331.3 708.3 334.7 719.9 333.9 C731.5 333.0 735.8 328.8 747.0 327.2 C758.1 325.5 774.9 324.9 787.0 323.9 C799.2 323.0 807.3 322.8 819.7 321.5 C832.1 320.1 854.7 316.9 861.7 315.9 M574.2 349.9 C578.2 350.5 587.7 353.5 598.0 354.0 C608.2 354.5 625.8 354.5 635.8 352.8 C645.9 351.1 649.6 344.7 658.2 344.0 C666.8 343.3 677.1 349.2 687.4 348.6 C697.7 348.0 709.2 340.5 719.8 340.4 C730.5 340.2 740.4 348.0 751.4 347.9 C762.4 347.8 780.0 341.0 785.7 339.7 M625.8 352.8 C632.1 353.7 653.2 356.1 663.5 358.1 C673.9 360.2 677.6 363.9 687.9 365.0 C698.2 366.1 714.9 364.5 725.3 364.8 C735.7 365.1 741.0 366.1 750.4 366.7 C759.7 367.2 770.3 368.5 781.4 368.0 C792.4 367.5 805.5 362.9 816.8 363.5 C828.1 364.0 843.7 369.9 849.1 371.2 M531.2 365.1 C538.4 364.9 559.5 364.2 574.5 363.9 C589.5 363.6 605.4 363.8 621.4 363.4 C637.3 363.0 655.2 362.3 670.2 361.6 C685.2 360.8 697.5 359.7 711.3 358.7 C725.2 357.6 739.4 356.1 753.6 355.3 C767.8 354.4 781.2 353.2 796.5 353.6 C811.9 354.0 837.6 357.2 845.8 357.9 M580.5 378.0 C587.4 378.3 607.7 380.6 621.9 379.9 C636.2 379.3 650.5 374.4 665.8 373.9 C681.2 373.3 699.2 376.8 714.1 376.6 C729.0 376.4 740.3 374.0 755.3 372.5 C770.4 371.0 789.3 369.6 804.4 367.9 C819.5 366.1 832.3 364.0 846.1 362.2 C859.9 360.5 880.4 358.2 887.3 357.3 M604.3 392.2 C610.6 391.5 631.8 390.0 641.8 388.2 C651.8 386.4 655.6 382.4 664.2 381.4 C672.7 380.3 683.7 382.0 693.1 381.6 C702.5 381.3 710.9 379.1 720.4 379.4 C730.0 379.6 739.3 383.4 750.4 382.9 C761.5 382.4 777.5 376.9 787.0 376.2 C796.6 375.5 804.4 378.3 807.9 378.7 M562.5 400.3 C567.2 400.2 581.1 400.3 590.5 399.6 C600.0 398.9 609.3 396.6 619.4 396.2 C629.6 395.7 641.0 397.6 651.4 396.9 C661.8 396.2 671.2 392.6 681.9 392.0 C692.7 391.5 704.5 392.9 715.9 393.6 C727.2 394.3 738.9 395.6 750.0 396.1 C761.2 396.6 777.4 396.7 782.9 396.8 M630.8 409.2 C635.1 410.0 648.8 412.7 656.7 413.6 C664.6 414.5 668.1 415.0 678.0 414.6 C687.9 414.2 705.2 411.6 716.1 411.2 C726.9 410.8 734.9 412.7 743.1 412.2 C751.3 411.6 756.1 408.2 765.3 407.9 C774.4 407.6 787.2 410.0 798.0 410.2 C808.8 410.4 824.8 409.2 830.1 409.0 M624.2 417.5 C629.6 418.4 645.7 420.5 656.6 422.4 C667.6 424.3 677.9 427.9 689.9 428.8 C701.8 429.7 716.3 427.6 728.4 427.8 C740.6 427.9 751.6 430.3 762.7 429.6 C773.8 428.8 783.2 422.8 794.7 423.3 C806.2 423.8 820.5 431.3 831.7 432.7 C842.9 434.1 856.9 431.8 862.0 431.6 M521.3 182.0 C522.1 188.2 525.6 205.3 526.0 219.2 C526.4 233.1 524.9 252.6 523.6 265.5 C522.4 278.4 519.8 284.7 518.5 296.8 C517.2 308.9 516.1 324.9 515.8 337.9 C515.5 351.0 517.0 363.5 516.5 375.0 C516.0 386.5 513.3 401.6 512.7 406.9 M535.2 192.4 C534.0 198.8 528.2 217.8 527.7 230.9 C527.2 244.1 532.0 259.4 532.5 271.3 C532.9 283.2 531.5 291.1 530.5 302.6 C529.6 314.1 527.9 328.6 526.8 340.2 C525.8 351.8 524.3 360.7 524.3 372.1 C524.4 383.5 526.6 402.6 527.1 408.7 M554.6 250.7 C553.8 252.6 551.4 255.9 550.1 262.3 C548.8 268.7 547.6 282.0 547.1 289.0 C546.5 296.0 546.9 298.6 546.7 304.3 C546.4 309.9 544.3 317.3 545.5 322.9 C546.7 328.5 552.9 331.5 554.0 337.9 C555.1 344.3 552.4 357.4 552.1 361.3 M562.0 224.0 C561.7 228.9 559.4 245.0 560.6 253.6 C561.9 262.3 568.0 268.1 569.5 276.0 C571.1 283.9 569.0 291.8 570.1 301.0 C571.2 310.2 574.9 322.0 576.0 331.0 C577.1 339.9 574.2 347.6 576.5 354.5 C578.8 361.3 587.5 369.1 589.7 372.0 M572.6 228.7 C573.4 234.5 578.1 252.3 577.3 263.1 C576.6 273.9 570.3 283.8 568.2 293.5 C566.2 303.3 566.4 310.1 565.2 321.5 C564.0 333.0 561.9 350.0 561.2 362.4 C560.5 374.8 561.5 386.0 561.1 395.7 C560.7 405.4 559.0 416.4 558.6 420.5 M587.3 196.7 C587.6 202.3 587.4 219.7 589.1 230.0 C590.7 240.2 595.4 249.0 597.0 258.1 C598.7 267.2 598.0 274.2 599.2 284.8 C600.3 295.3 602.3 309.5 603.9 321.3 C605.4 333.1 608.0 345.6 608.7 355.6 C609.4 365.6 608.2 376.9 608.1 381.2 M594.9 191.5 C595.9 196.3 600.7 209.8 600.8 220.3 C601.0 230.8 597.0 243.2 595.7 254.8 C594.5 266.4 594.5 278.7 593.1 289.8 C591.7 300.9 588.4 309.0 587.2 321.3 C586.1 333.6 586.0 352.0 586.1 363.5 C586.2 374.9 587.5 385.6 587.7 390.0 M605.3 245.3 C604.9 249.2 604.4 260.7 603.3 268.9 C602.2 277.1 599.3 285.0 598.6 294.3 C597.8 303.7 598.9 316.7 598.6 324.9 C598.3 333.0 598.5 336.1 597.0 343.3 C595.5 350.5 591.6 360.4 589.7 368.1 C587.8 375.9 586.3 386.1 585.7 389.7 M615.2 200.9 C615.2 206.4 617.1 222.4 615.4 234.4 C613.7 246.3 607.3 259.7 605.2 272.8 C603.1 285.9 602.8 299.2 602.8 313.0 C602.9 326.8 605.6 343.6 605.2 355.5 C604.8 367.4 603.5 372.0 600.6 384.4 C597.6 396.9 589.7 422.4 587.6 430.0 M630.6 217.8 C630.5 222.9 631.0 239.2 630.4 248.4 C629.8 257.6 630.0 263.9 627.0 273.0 C624.0 282.2 615.0 292.1 612.5 303.3 C610.0 314.6 612.2 329.0 612.0 340.4 C611.9 351.9 613.1 361.6 611.6 372.2 C610.2 382.8 604.8 398.7 603.4 404.0 M637.8 223.2 C639.0 226.1 644.4 233.7 645.2 240.5 C645.9 247.3 641.4 255.2 642.3 263.9 C643.2 272.7 649.8 285.2 650.7 292.9 C651.6 300.5 647.0 302.2 647.8 310.0 C648.5 317.8 653.7 331.4 655.1 339.7 C656.6 347.9 656.2 356.4 656.5 359.7 M658.3 182.3 C658.1 187.6 658.5 203.5 657.0 213.9 C655.6 224.3 649.5 233.2 649.5 244.7 C649.5 256.3 657.1 272.5 657.1 283.2 C657.1 293.9 650.5 298.0 649.5 309.1 C648.5 320.1 651.1 338.1 651.2 349.6 C651.3 361.2 650.2 373.6 650.0 378.4 M663.4 243.9 C663.3 247.1 663.3 255.4 662.6 263.3 C661.8 271.2 661.0 283.8 659.2 291.1 C657.3 298.4 652.5 300.6 651.3 307.1 C650.0 313.6 652.7 322.8 651.7 330.1 C650.8 337.4 648.4 343.0 645.4 351.1 C642.5 359.2 636.1 374.1 634.2 378.7 M671.5 245.7 C671.8 250.8 674.4 268.1 673.3 276.2 C672.1 284.4 666.3 286.5 664.4 294.8 C662.6 303.1 663.1 318.3 662.0 325.9 C661.0 333.5 659.4 333.3 658.1 340.4 C656.8 347.6 653.8 359.1 654.1 368.9 C654.4 378.6 659.2 393.9 660.2 398.9 M685.3 254.6 C686.1 257.8 689.5 265.2 689.8 273.9 C690.1 282.6 688.4 296.7 687.2 307.0 C685.9 317.2 683.8 326.6 682.3 335.7 C680.8 344.7 679.1 351.5 678.3 361.3 C677.6 371.1 677.0 384.4 677.8 394.3 C678.7 404.3 682.6 416.6 683.6 421.1 M705.3 193.8 C704.4 199.1 699.8 214.5 700.0 226.0 C700.3 237.4 705.5 252.2 706.8 262.6 C708.2 273.0 706.0 279.3 708.1 288.2 C710.1 297.2 717.5 304.9 719.0 316.3 C720.5 327.7 716.1 346.1 716.9 356.7 C717.7 367.3 722.8 376.0 724.0 379.9 M710.5 188.8 C709.4 194.3 704.0 209.1 703.6 221.9 C703.2 234.7 708.9 251.5 708.0 265.7 C707.0 279.8 699.9 294.1 697.9 306.8 C695.9 319.5 697.4 328.5 696.1 341.9 C694.8 355.3 689.9 373.2 690.2 387.2 C690.5 401.2 696.5 419.4 697.8 425.9 M729.9 186.7 C728.8 190.8 724.4 201.4 723.4 211.4 C722.3 221.4 722.7 235.8 723.6 246.5 C724.5 257.2 728.2 264.3 728.8 275.5 C729.4 286.8 727.5 302.2 727.2 314.1 C726.9 326.0 727.6 336.9 727.2 346.9 C726.7 357.0 725.0 369.9 724.6 374.5 M729.4 208.1 C728.8 212.7 727.4 224.2 725.7 235.4 C724.0 246.7 720.4 262.4 719.2 275.7 C717.9 289.0 718.0 302.9 718.2 315.3 C718.3 327.8 721.6 340.3 720.1 350.3 C718.6 360.3 711.9 364.5 709.1 375.3 C706.2 386.0 704.0 408.2 703.0 414.7 M748.0 213.2 C748.1 218.1 748.8 234.5 748.6 242.6 C748.4 250.8 746.9 254.0 746.8 262.2 C746.7 270.3 748.4 281.9 747.9 291.6 C747.5 301.2 744.5 311.0 744.1 320.0 C743.6 329.0 746.0 336.6 745.1 345.6 C744.3 354.5 739.9 368.9 738.9 373.6 M753.8 247.3 C753.7 250.3 753.1 257.2 753.3 265.4 C753.4 273.6 754.5 287.9 754.8 296.4 C755.1 305.0 756.3 307.7 755.1 316.8 C753.9 325.9 748.6 340.8 747.7 351.1 C746.8 361.4 751.4 370.8 750.0 378.6 C748.6 386.5 741.2 394.9 739.4 398.2 M771.0 191.9 C771.1 198.5 772.1 218.1 771.2 231.8 C770.2 245.6 764.9 262.2 765.3 274.6 C765.8 287.0 772.8 293.6 773.7 306.4 C774.6 319.1 771.8 337.6 770.7 351.1 C769.6 364.7 767.9 375.2 767.4 387.5 C766.8 399.8 767.4 418.6 767.4 424.9 M773.4 220.1 C774.1 224.9 778.2 239.1 777.7 249.1 C777.3 259.1 771.5 269.0 770.7 279.9 C770.0 290.8 774.5 304.3 773.1 314.3 C771.6 324.3 763.8 329.8 762.1 340.0 C760.3 350.2 762.7 365.4 762.7 375.6 C762.8 385.7 762.5 396.9 762.5 401.1 M787.7 233.7 C787.3 237.4 786.2 248.2 785.6 256.1 C784.9 264.0 783.6 271.4 783.9 281.1 C784.2 290.8 788.0 305.7 787.3 314.1 C786.6 322.6 780.6 324.6 779.6 332.0 C778.6 339.5 782.8 348.6 781.5 358.8 C780.1 368.9 773.0 387.4 771.3 393.1 M802.5 233.7 C802.3 238.6 799.8 253.4 801.4 263.2 C803.0 272.9 810.7 283.8 812.1 292.3 C813.6 300.8 809.1 306.6 809.9 314.3 C810.7 321.9 815.5 330.4 816.8 338.1 C818.2 345.9 816.6 351.7 818.2 360.9 C819.7 370.0 824.8 387.7 826.1 393.1 M809.3 210.2 C811.5 217.4 820.1 242.1 822.2 253.2 C824.3 264.3 820.3 266.6 821.8 276.8 C823.3 286.9 829.0 301.8 831.3 314.1 C833.7 326.4 834.4 339.5 835.8 350.3 C837.1 361.1 838.2 368.4 839.6 378.9 C840.9 389.4 843.1 407.6 843.8 413.3 M822.9 238.1 C822.9 243.1 824.3 258.1 823.1 267.8 C821.8 277.4 816.2 285.2 815.5 296.1 C814.9 306.9 820.2 322.5 819.0 333.0 C817.8 343.5 809.3 350.8 808.3 359.1 C807.3 367.5 812.6 374.0 813.0 383.2 C813.4 392.3 811.1 408.7 810.7 413.8 M837.9 219.4 C837.6 224.7 836.6 241.1 836.0 251.1 C835.4 261.2 835.7 269.4 834.3 279.6 C833.0 289.8 828.3 302.6 827.7 312.5 C827.2 322.4 830.2 328.6 830.9 339.2 C831.6 349.8 832.7 365.9 832.0 376.1 C831.3 386.3 827.6 396.3 826.7 400.4 M845.1 186.9 C845.8 191.2 848.3 203.3 849.1 212.7 C849.8 222.1 849.6 232.0 849.8 243.4 C849.9 254.8 850.6 271.3 850.1 281.3 C849.7 291.3 847.6 294.2 847.0 303.6 C846.3 312.9 845.6 327.2 846.2 337.4 C846.8 347.6 849.7 360.4 850.4 365.0 M860.2 255.0 C861.2 259.5 864.2 274.2 866.6 281.7 C869.0 289.1 872.8 291.0 874.4 299.9 C876.0 308.8 876.7 325.9 876.2 335.2 C875.7 344.5 870.4 348.2 871.4 355.8 C872.4 363.3 879.5 371.7 882.1 380.6 C884.7 389.4 886.0 404.1 886.8 408.8 M871.7 187.4 C872.9 193.2 878.1 211.0 879.2 222.2 C880.2 233.5 877.4 242.4 878.2 254.9 C879.0 267.4 881.2 284.7 883.8 297.4 C886.3 310.1 892.3 320.0 893.7 331.1 C895.1 342.3 891.9 353.4 892.2 364.1 C892.6 374.8 895.3 390.3 895.9 395.5 M886.3 209.4 C885.5 215.6 881.3 235.5 881.6 246.6 C881.9 257.7 886.5 265.3 887.9 276.0 C889.4 286.7 889.5 298.2 890.3 310.6 C891.2 322.9 893.6 337.1 893.0 350.0 C892.4 362.9 887.5 376.8 886.6 388.0 C885.8 399.3 887.9 412.6 888.1 417.6" fill="none" stroke="#f4c4a6" stroke-width=".7" stroke-opacity=".6" clip-path="url(#uc)"/>
<path d="M111.0 227.3 C111.9 230.0 114.7 237.0 116.5 243.7 C118.4 250.4 118.4 263.1 122.1 267.6 C125.8 272.1 135.5 268.7 138.8 270.8 C142.1 272.9 140.2 278.9 142.0 280.4 C143.9 281.8 147.1 278.5 150.0 279.6 C152.9 280.6 154.5 285.3 159.5 286.7 C164.6 288.2 174.7 289.0 180.2 288.3 C185.8 287.7 188.7 283.1 193.0 282.7 C197.2 282.3 200.4 285.9 205.7 285.9 C211.0 285.9 220.1 283.0 224.8 282.7 C229.6 282.5 230.7 287.0 234.4 284.3 C238.1 281.7 242.4 271.1 247.1 266.8 C251.9 262.6 257.8 261.9 263.1 258.8 C268.4 255.8 275.2 251.7 279.0 248.5 C282.8 245.3 284.8 241.2 286.0 239.7 M90.2 328.7 C88.3 329.5 81.4 331.2 78.3 333.5 C75.2 335.7 74.8 339.2 71.9 342.2 C69.0 345.3 63.4 348.9 60.8 351.8 C58.1 354.7 56.8 358.4 56.0 359.8 M133.3 394.0 C134.7 393.7 137.9 391.5 142.0 391.9 C146.1 392.3 153.7 393.8 157.9 396.4 C162.2 399.0 164.6 404.4 167.5 407.5 C170.4 410.7 174.4 412.3 175.5 415.5 C176.5 418.7 172.7 424.6 173.9 426.7 C175.1 428.7 181.2 427.8 182.6 428.1 M286.0 239.7 C286.8 239.1 287.9 236.5 290.8 235.8 C293.7 235.0 300.3 236.3 303.5 235.0 C306.7 233.6 307.2 229.9 309.9 227.8 C312.5 225.7 315.5 223.0 319.5 222.2 C323.4 221.4 330.3 223.9 333.8 223.0 C337.2 222.1 338.8 218.6 340.2 216.6 C341.5 214.6 342.0 213.2 341.8 211.1 C341.5 208.9 341.0 206.9 338.6 203.9 C336.2 200.8 331.1 196.7 327.4 192.7 C323.7 188.8 318.1 182.1 316.3 180.0 M341.8 211.1 C343.1 211.7 348.1 213.5 349.7 215.0 C351.3 216.6 349.2 219.3 351.3 220.6 C353.4 221.9 360.1 221.7 362.5 223.0 C364.8 224.3 363.8 227.3 365.6 228.6 C367.5 229.9 371.0 229.4 373.6 231.0 C376.3 232.6 379.2 237.5 381.6 238.1 C384.0 238.8 385.3 235.8 387.9 235.0 C390.6 234.2 395.4 232.8 397.5 233.4 C399.6 233.9 398.8 237.1 400.7 238.1 C402.5 239.2 406.5 240.7 408.7 239.7 C410.8 238.8 412.1 234.3 413.4 232.6 C414.8 230.8 414.8 229.4 416.6 229.4 C418.5 229.4 422.5 233.1 424.6 232.6 C426.7 232.0 427.5 226.5 429.4 226.2 C431.2 225.9 433.1 230.7 435.7 231.0 C438.4 231.2 442.5 229.0 445.3 227.8 C448.1 226.6 451.9 227.0 452.5 223.8 C453.0 220.6 448.6 213.8 448.5 208.7 C448.3 203.5 449.5 197.5 451.7 192.7 C453.8 188.0 459.6 182.1 461.2 180.0 M452.5 223.8 C453.4 225.5 457.6 230.3 458.0 234.2 C458.4 238.0 454.7 243.2 454.8 246.9 C455.0 250.6 459.1 253.5 458.8 256.5 C458.6 259.4 456.3 262.3 453.3 264.4 C450.2 266.5 440.8 266.8 440.5 269.2 C440.2 271.6 449.5 276.1 451.7 278.8 C453.8 281.4 451.7 284.3 453.3 285.1 C454.8 285.9 458.8 282.5 461.2 283.5 C463.6 284.6 467.1 288.1 467.6 291.5 C468.1 294.9 464.9 302.0 464.4 304.1 M453.3 304.0 C454.0 305.6 457.8 308.2 458.0 313.6 C458.3 318.9 456.2 330.8 454.8 335.9 C453.5 340.9 449.0 340.4 450.1 343.8 C451.1 347.3 458.6 354.0 461.2 356.6 C463.9 359.1 465.5 357.5 466.0 359.0 C466.5 360.4 462.5 364.4 464.4 365.3 C466.3 366.3 475.0 364.7 477.1 364.5 M426.2 428.1 C426.7 426.5 426.2 420.4 429.4 418.7 C432.5 417.0 440.0 417.2 445.3 417.9 C450.6 418.6 457.8 422.8 461.2 422.7 C464.7 422.5 462.0 417.1 466.0 417.1 C470.0 417.1 476.8 422.9 485.1 422.7 C493.4 422.4 510.9 416.7 516.0 415.5 M691.2 180.0 C687.5 180.5 673.4 181.6 668.9 183.2 C664.4 184.8 664.4 187.4 664.1 189.6 C663.9 191.7 668.1 194.1 667.3 195.9 C666.5 197.8 661.2 198.1 659.4 200.7 C657.5 203.4 657.8 208.9 656.2 211.9 C654.6 214.8 652.2 216.6 649.8 218.2 C647.4 219.8 643.2 220.9 641.8 221.4 M653.0 219.8 C655.6 220.9 663.9 225.5 668.9 226.2 C674.0 226.9 679.5 223.5 683.3 223.8 C687.0 224.1 688.6 225.9 691.2 227.8 C693.9 229.6 695.2 233.4 699.2 235.0 C703.2 236.5 707.3 238.0 715.1 237.3 C722.9 236.7 740.9 232.0 746.0 231.0 M516.0 329.5 C518.1 330.0 525.6 331.1 528.7 332.7 C531.9 334.3 531.4 339.0 535.1 339.0 C538.8 339.0 546.3 332.4 551.0 332.7 C555.8 332.9 559.5 337.8 563.8 340.6 C568.0 343.4 573.3 349.1 576.5 349.4 C579.7 349.7 581.3 345.0 582.9 342.2 C584.5 339.4 583.4 335.1 586.1 332.7 C588.7 330.3 595.4 328.4 598.8 327.9 C602.3 327.4 604.9 328.2 606.8 329.5 C608.7 330.8 607.9 334.0 610.0 335.9 C612.1 337.7 616.6 340.4 619.5 340.6 C622.5 340.9 624.6 336.9 627.5 337.5 C630.4 338.0 634.1 342.2 637.1 343.8 C640.0 345.4 642.6 345.8 645.0 347.0 C647.4 348.2 650.3 350.3 651.4 351.0 M516.0 415.5 C517.6 416.6 522.1 419.8 525.6 421.9 C529.0 424.0 534.8 427.0 536.7 428.1 M659.4 428.1 C661.0 426.5 665.2 421.0 668.9 418.7 C672.6 416.3 677.9 415.8 681.7 413.9 C685.4 412.0 686.2 410.5 691.2 407.5 C696.3 404.6 706.6 397.7 711.9 396.4 C717.2 395.1 717.4 396.4 723.1 399.6 C728.8 402.8 742.2 412.8 746.0 415.5 M822.5 180.0 C821.4 181.1 819.3 184.6 816.1 186.4 C812.9 188.1 806.3 188.2 803.3 190.4 C800.4 192.5 801.0 197.8 798.6 199.1 C796.2 200.4 791.7 197.5 789.0 198.3 C786.4 199.1 785.8 201.9 782.6 203.9 C779.5 205.9 774.4 207.3 769.9 210.3 C765.4 213.2 759.5 218.2 755.6 221.4 C751.6 224.6 747.6 228.1 746.0 229.4 M933.2 220.6 C933.3 221.5 934.4 222.9 934.0 226.2 C933.6 229.5 933.2 236.0 930.8 240.5 C928.4 245.0 922.0 249.0 919.6 253.3 C917.2 257.5 919.4 264.2 916.4 266.0 C913.5 267.9 905.8 262.8 902.1 264.4 C898.4 266.0 894.9 272.4 894.1 275.6 C893.3 278.8 897.6 279.8 897.3 283.5 C897.1 287.3 892.5 294.4 892.5 297.9 C892.5 301.3 896.5 303.0 897.3 304.1 M897.3 304.0 C898.6 305.6 902.6 310.4 905.3 313.6 C907.9 316.7 912.2 320.5 913.3 323.1 C914.3 325.8 910.3 326.8 911.7 329.5 C913.0 332.1 918.0 336.1 921.2 339.0 C924.4 342.0 929.7 344.1 930.8 347.0 C931.8 349.9 929.2 353.9 927.6 356.6 C926.0 359.2 921.5 360.5 921.2 362.9 C920.9 365.3 925.7 367.4 926.0 370.9 C926.3 374.4 922.5 380.5 922.8 383.6 C923.1 386.8 927.9 387.4 927.6 390.0 C927.3 392.7 922.5 396.4 921.2 399.6 C919.9 402.8 920.4 405.9 919.6 409.1 C918.8 412.3 917.5 415.5 916.4 418.7 C915.4 421.8 913.8 426.5 913.3 428.1 M746.0 412.3 C749.2 413.1 757.2 417.1 765.1 417.1 C773.1 417.1 785.8 413.6 793.8 412.3 C801.8 411.0 804.9 409.9 812.9 409.1 C820.9 408.3 834.1 408.1 841.6 407.5 C849.0 407.0 852.5 404.9 857.5 405.9 C862.5 407.0 868.9 411.3 871.8 413.9 C874.8 416.6 874.8 419.5 875.0 421.9 C875.3 424.2 873.7 427.0 873.4 428.1 M1058.8 180.0 C1057.8 180.9 1054.6 185.2 1052.5 185.6 C1050.3 186.0 1047.7 182.5 1046.1 182.4 C1044.5 182.3 1042.6 183.3 1042.9 184.8 C1043.2 186.2 1046.4 188.2 1047.7 191.2 C1049.0 194.1 1051.9 199.6 1050.9 202.3 C1049.8 205.0 1043.2 205.5 1041.3 207.1 C1039.4 208.7 1038.9 210.5 1039.7 211.9 C1040.5 213.2 1045.3 212.9 1046.1 215.0 C1046.9 217.2 1044.2 221.4 1044.5 224.6 C1044.8 227.8 1045.8 231.2 1047.7 234.2 C1049.5 237.1 1054.6 239.5 1055.6 242.1 C1056.7 244.8 1053.5 247.7 1054.1 250.1 C1054.6 252.5 1057.5 253.3 1058.8 256.5 C1060.2 259.6 1060.7 266.0 1062.0 269.2 C1063.3 272.4 1066.3 273.4 1066.8 275.6 C1067.3 277.7 1066.3 280.9 1065.2 281.9 C1064.1 283.0 1060.2 280.9 1060.4 281.9 C1060.7 283.0 1064.4 286.7 1066.8 288.3 C1069.2 289.9 1074.0 288.9 1074.8 291.5 C1075.6 294.1 1072.1 302.0 1071.6 304.1 M1166.3 180.0 C1165.9 181.6 1165.2 186.1 1164.0 189.6 C1162.8 193.0 1160.5 195.7 1159.2 200.7 C1157.9 205.8 1157.6 214.2 1156.0 219.8 C1154.4 225.4 1149.6 228.8 1149.6 234.2 C1149.6 239.5 1154.4 245.8 1156.0 251.7 C1157.6 257.5 1158.4 263.9 1159.2 269.2 C1160.0 274.5 1161.0 279.8 1160.8 283.5 C1160.5 287.3 1157.1 288.1 1157.6 291.5 C1158.1 294.9 1162.9 302.0 1164.0 304.1 M1070.0 304.0 C1072.6 305.2 1084.0 308.5 1085.9 311.2 C1087.8 313.8 1082.7 316.9 1081.1 319.9 C1079.5 323.0 1076.6 326.8 1076.4 329.5 C1076.1 332.1 1080.3 333.6 1079.5 335.9 C1078.7 338.1 1070.5 339.6 1071.6 343.0 C1072.6 346.5 1083.5 353.2 1085.9 356.6 C1088.3 359.9 1084.0 361.6 1085.9 362.9 C1087.8 364.3 1094.4 363.2 1097.1 364.5 C1099.7 365.9 1099.7 369.0 1101.8 370.9 C1104.0 372.8 1107.7 373.6 1109.8 375.7 C1111.9 377.8 1111.9 381.3 1114.6 383.6 C1117.2 386.0 1121.2 387.6 1125.7 390.0 C1130.2 392.4 1135.3 395.6 1141.7 398.0 C1148.0 400.4 1158.6 403.8 1164.0 404.4 C1169.3 404.9 1170.3 400.9 1173.5 401.2 C1176.7 401.4 1180.7 403.6 1183.1 405.9 C1185.5 408.3 1187.1 412.8 1187.9 415.5 C1188.6 418.2 1184.8 419.8 1187.9 421.9 C1190.9 424.0 1203.0 427.0 1206.0 428.1 M1239.5 190.4 C1241.8 190.6 1250.6 190.9 1253.8 191.9 C1257.0 193.0 1256.2 195.8 1258.6 196.7 C1261.0 197.7 1265.2 198.2 1268.1 197.5 C1271.0 196.9 1273.2 192.5 1276.1 192.7 C1279.0 193.0 1283.8 196.5 1285.6 199.1 C1287.5 201.8 1285.9 205.2 1287.2 208.7 C1288.6 212.1 1292.3 216.6 1293.6 219.8 C1294.9 223.0 1293.9 224.3 1295.2 227.8 C1296.5 231.2 1299.4 236.0 1301.6 240.5 C1303.7 245.0 1305.3 250.1 1307.9 254.9 C1310.6 259.6 1314.8 266.5 1317.5 269.2 C1320.2 271.9 1322.0 269.7 1323.9 270.8 C1325.7 271.9 1327.1 275.0 1328.7 275.6 C1330.2 276.1 1331.8 272.7 1333.4 274.0 C1335.0 275.3 1336.1 281.4 1338.2 283.5 C1340.3 285.7 1344.3 284.9 1346.2 286.7 C1348.0 288.6 1347.2 291.8 1349.4 294.7 C1351.5 297.6 1357.3 302.5 1358.9 304.1 M1350.2 180.0 C1350.8 181.9 1351.6 187.7 1354.1 191.2 C1356.7 194.6 1361.3 196.5 1365.3 200.7 C1369.3 205.0 1374.3 211.6 1378.0 216.6 C1381.7 221.7 1383.9 226.7 1387.6 231.0 C1391.3 235.2 1397.9 237.9 1400.3 242.1 C1402.7 246.4 1400.3 252.5 1401.9 256.5 C1403.5 260.4 1408.8 262.3 1409.9 266.0 C1410.9 269.7 1409.1 274.5 1408.3 278.8 C1407.5 283.0 1405.9 287.3 1405.1 291.5 C1404.3 295.7 1403.8 302.0 1403.5 304.1 M1207.6 348.6 C1208.4 351.8 1210.2 362.9 1212.4 367.7 C1214.5 372.5 1218.7 374.1 1220.3 377.3 C1221.9 380.5 1221.7 385.2 1221.9 386.8 M1371.7 330.3 C1372.7 332.8 1377.0 340.8 1378.0 345.4 C1379.1 350.1 1377.0 353.4 1378.0 358.2 C1379.1 362.9 1382.8 368.2 1384.4 374.1 C1386.0 379.9 1387.3 386.3 1387.6 393.2 C1387.9 400.1 1386.5 409.7 1386.0 415.5 C1385.5 421.3 1384.7 426.0 1384.4 428.1 M1405.1 304.0 C1405.5 305.6 1406.6 311.6 1407.5 313.6 C1408.4 315.5 1410.6 314.9 1410.7 315.9 C1410.8 317.0 1408.4 315.3 1408.3 319.9 C1408.2 324.6 1408.8 337.5 1409.9 343.8 C1410.9 350.2 1414.1 354.2 1414.7 358.2 C1415.2 362.1 1412.5 365.3 1413.1 367.7 C1413.6 370.1 1417.6 369.8 1417.9 372.5 C1418.1 375.1 1416.0 380.2 1414.7 383.6 C1413.3 387.1 1410.9 389.5 1409.9 393.2 C1408.8 396.9 1409.4 401.7 1408.3 405.9 C1407.2 410.2 1405.4 415.0 1403.5 418.7 C1401.7 422.4 1398.2 426.5 1397.1 428.1" fill="none" stroke="#a9d0f0" stroke-width="0.9" stroke-linejoin="round" stroke-linecap="round"/>
<path d="M56.0 202.3 C61.7 200.7 78.6 196.5 90.2 192.7 C101.9 189.0 120.1 182.1 126.1 180.0 M142.0 325.5 C143.3 327.2 148.1 331.7 150.0 335.9 C151.8 340.0 152.6 347.8 153.2 350.2 M286.0 382.1 C284.3 383.5 279.6 387.4 275.8 390.8 C272.0 394.3 266.1 398.6 263.1 402.8 C260.0 406.9 258.6 411.3 257.5 415.5 C256.4 419.7 256.8 426.0 256.7 428.1 M309.9 180.0 C309.8 184.8 309.1 196.7 309.1 208.7 C309.1 220.6 308.4 240.5 309.9 251.7 C311.4 262.8 316.1 266.8 317.9 275.6 C319.6 284.3 319.8 299.3 320.2 304.1 M347.3 227.8 C348.3 225.4 349.8 216.9 352.9 213.5 C356.0 210.0 361.9 210.0 365.6 207.1 C369.4 204.2 373.3 198.3 375.2 195.9 C377.1 193.5 376.5 193.3 376.8 192.7 M352.9 180.0 C354.2 181.3 357.4 185.3 360.9 188.0 C364.3 190.6 371.5 194.6 373.6 195.9 M373.6 195.9 C373.9 197.8 372.8 203.4 375.2 207.1 C377.6 210.8 383.4 215.0 387.9 218.2 C392.5 221.4 399.6 221.9 402.3 226.2 C404.9 230.4 402.5 240.0 403.9 243.7 C405.2 247.4 409.2 247.7 410.2 248.5 M347.3 258.1 C348.8 259.9 353.6 265.2 356.1 269.2 C358.6 273.2 360.3 277.2 362.5 281.9 C364.6 286.7 367.6 294.2 368.8 297.9 C370.0 301.6 369.5 303.0 369.6 304.1 M405.5 186.4 C406.8 188.5 410.8 194.9 413.4 199.1 C416.1 203.4 418.7 208.1 421.4 211.9 C424.0 215.6 426.4 218.0 429.4 221.4 C432.3 224.9 437.3 230.7 438.9 232.6 M416.6 203.9 C421.4 204.4 437.9 205.8 445.3 207.1 C452.7 208.4 454.6 210.8 461.2 211.9 C467.9 212.9 476.0 212.7 485.1 213.5 C494.2 214.2 510.9 216.1 516.0 216.6 M461.2 180.0 C463.3 180.8 470.8 184.5 474.0 184.8 C477.1 185.0 473.3 181.6 480.3 181.6 C487.3 181.6 510.1 184.2 516.0 184.8 M481.9 180.0 C480.3 182.7 474.5 190.6 472.4 195.9 C470.2 201.2 470.8 205.8 469.2 211.9 C467.6 218.0 464.1 226.2 462.8 232.6 C461.5 238.9 461.5 247.2 461.2 250.1 M507.4 180.0 C507.1 184.0 505.0 194.9 505.8 203.9 C506.6 212.9 510.5 227.5 512.2 234.2 C513.9 240.8 515.4 242.1 516.0 243.7 M286.0 183.2 L309.9 180.0 M461.2 250.1 C462.5 252.2 463.9 259.6 469.2 262.8 C474.5 266.0 485.3 268.7 493.1 269.2 C500.9 269.7 512.2 266.5 516.0 266.0 M486.7 304.0 C487.8 306.7 491.2 314.6 493.1 319.9 C494.9 325.2 494.9 330.5 497.9 335.9 C500.8 341.2 508.2 346.5 510.6 351.8 C513.0 357.1 512.7 361.3 512.2 367.7 C511.7 374.1 508.5 384.7 507.4 390.0 C506.3 395.3 505.5 395.3 505.8 399.6 C506.1 403.8 507.3 412.3 509.0 415.5 C510.7 418.7 514.8 418.2 516.0 418.7 M321.0 304.0 C324.0 305.1 331.1 309.0 338.6 310.4 C346.0 311.7 359.8 309.8 365.6 312.0 C371.5 314.1 372.3 321.3 373.6 323.1 M286.0 334.3 C287.6 335.3 292.4 338.0 295.6 340.6 C298.7 343.3 304.1 345.7 305.1 350.2 C306.2 354.7 303.5 364.3 301.9 367.7 C300.3 371.2 298.2 368.5 295.6 370.9 C292.9 373.3 287.6 380.2 286.0 382.1 M481.9 402.8 C482.5 404.9 484.8 411.3 485.1 415.5 C485.4 419.7 483.8 426.0 483.5 428.1 M491.5 375.7 C492.5 377.5 495.5 382.8 497.9 386.8 C500.2 390.8 504.5 397.4 505.8 399.6 M516.0 195.9 C520.0 195.9 531.9 196.5 539.9 195.9 C547.9 195.4 556.4 192.7 563.8 192.7 C571.2 192.7 578.1 196.5 584.5 195.9 C590.9 195.4 599.1 190.6 602.0 189.6 M525.6 180.0 C527.9 182.7 535.6 190.6 539.9 195.9 C544.1 201.2 546.3 210.3 551.0 211.9 C555.8 213.5 563.3 205.0 568.6 205.5 C573.9 206.0 577.9 212.7 582.9 215.0 C587.9 217.4 596.2 219.0 598.8 219.8 M516.0 218.2 C518.7 219.8 526.6 224.3 531.9 227.8 C537.2 231.2 545.2 237.1 547.9 238.9 M568.6 205.5 C570.4 202.8 575.7 193.8 579.7 189.6 C583.7 185.3 590.3 181.6 592.5 180.0 M547.9 238.9 C546.8 241.9 545.2 251.9 541.5 256.5 C537.8 261.0 529.8 265.0 525.6 266.0 C521.3 267.1 517.6 263.4 516.0 262.8 M560.6 246.9 C561.1 249.6 561.1 258.1 563.8 262.8 C566.4 267.6 574.4 273.4 576.5 275.6 M605.2 253.3 C607.3 251.4 613.2 245.8 617.9 242.1 C622.7 238.4 628.8 233.6 633.9 231.0 C638.9 228.3 642.4 227.3 648.2 226.2 C654.0 225.1 665.5 224.9 668.9 224.6 M617.9 242.1 C618.2 246.6 619.0 258.9 619.5 269.2 C620.1 279.5 620.9 298.3 621.1 304.1 M622.7 248.5 C626.2 248.8 637.3 247.7 643.4 250.1 C649.5 252.5 654.6 258.6 659.4 262.8 C664.1 267.1 666.5 272.4 672.1 275.6 C677.7 278.8 689.4 280.9 692.8 281.9 M633.9 231.0 C637.1 231.5 648.7 231.5 653.0 234.2 C657.2 236.8 656.7 241.1 659.4 246.9 C662.0 252.7 666.3 261.8 668.9 269.2 C671.6 276.6 674.2 287.8 675.3 291.5 M648.2 226.2 C649.5 223.8 652.7 216.9 656.2 211.9 C659.6 206.8 666.8 198.6 668.9 195.9 M605.2 205.5 C608.9 206.5 622.2 208.9 627.5 211.9 C632.8 214.8 635.5 221.1 637.1 223.0 M648.2 205.5 L691.2 205.5 M673.7 211.9 C676.9 212.7 685.9 215.8 692.8 216.6 C699.7 217.4 706.2 217.2 715.1 216.6 C724.0 216.1 740.9 214.0 746.0 213.5 M678.5 231.0 C681.0 231.2 688.0 232.0 693.6 232.6 C699.2 233.1 708.9 233.9 711.9 234.2 M699.2 180.0 C700.5 182.7 704.2 189.8 707.1 195.9 C710.1 202.0 715.1 213.2 716.7 216.6 M707.1 195.9 C710.1 196.7 718.8 200.7 724.7 200.7 C730.5 200.7 739.3 196.7 742.2 195.9 M727.9 218.2 L729.4 240.5 M721.5 246.9 C721.7 250.6 723.1 261.6 723.1 269.2 C723.1 276.8 721.7 288.4 721.5 292.3 M711.9 269.2 L746.0 269.2 M731.0 242.1 L746.0 250.1 M605.2 266.8 C606.3 268.8 609.2 274.6 611.6 278.8 C614.0 282.9 617.9 287.3 619.5 291.5 C621.1 295.7 620.9 302.0 621.1 304.1 M637.1 285.9 L638.7 304.1 M516.0 251.7 C518.4 252.2 526.1 254.1 530.3 254.9 C534.6 255.7 539.6 256.2 541.5 256.5 M582.9 261.2 C581.8 263.6 581.0 271.9 576.5 275.6 C572.0 279.3 559.3 282.2 555.8 283.5 M656.2 291.5 L659.4 304.1 M696.0 269.2 L713.5 268.4 M697.6 275.6 L713.5 275.6 M516.0 356.6 C521.3 356.0 539.9 353.6 547.9 353.4 C555.8 353.1 557.0 354.4 563.8 355.0 C570.6 355.5 584.4 356.3 588.5 356.6 M516.0 383.6 C517.9 382.4 523.7 376.5 527.2 376.5 C530.6 376.5 533.3 380.6 536.7 383.6 C540.2 386.7 544.5 392.8 547.9 394.8 C551.2 396.8 555.2 395.5 556.6 395.6 M571.8 397.2 L590.9 401.2 M547.9 343.8 C548.9 347.8 552.6 360.0 554.2 367.7 C555.8 375.4 556.9 386.3 557.4 390.0 M527.2 376.5 C528.5 374.5 531.7 368.4 535.1 364.5 C538.6 360.7 545.7 355.2 547.9 353.4 M588.5 356.6 C592.3 357.4 602.4 361.1 611.6 361.3 C620.7 361.6 636.8 359.9 643.4 358.2 C650.1 356.4 648.2 354.7 651.4 351.0 C654.6 347.3 660.7 338.4 662.5 335.9 M611.6 361.3 C612.6 365.1 618.2 378.6 617.9 383.6 C617.7 388.7 611.3 390.3 610.0 391.6 M594.1 375.7 C598.0 377.0 609.7 383.9 617.9 383.6 C626.2 383.4 634.7 376.7 643.4 374.1 C652.2 371.4 666.0 368.8 670.5 367.7 M602.0 319.9 C603.6 318.9 607.9 314.9 611.6 313.6 C615.3 312.2 622.2 312.2 624.3 312.0 M614.8 326.3 C614.2 329.2 609.4 338.8 611.6 343.8 C613.7 348.9 624.8 354.4 627.5 356.6 M625.9 304.0 C626.2 305.6 625.6 311.0 627.5 313.6 C629.4 316.1 635.5 318.2 637.1 319.1 M681.7 304.0 L682.5 428.1 M662.5 335.9 C666.8 337.5 680.6 342.0 688.0 345.4 C695.5 348.9 704.0 354.7 707.1 356.6 M707.1 356.6 L746.0 355.0 M723.1 330.3 C723.3 336.5 724.7 356.2 724.7 367.7 C724.7 379.3 723.3 394.3 723.1 399.6 M697.6 375.7 C701.8 376.2 715.0 378.6 723.1 378.9 C731.1 379.1 742.2 377.5 746.0 377.3 M702.4 402.8 C706.6 403.3 720.6 406.5 727.9 405.9 C735.1 405.4 743.0 400.6 746.0 399.6 M516.0 405.9 C519.2 405.9 528.5 402.3 535.1 405.9 C541.8 409.6 552.4 424.4 555.8 428.1 M584.5 407.5 L586.1 428.1 M605.2 398.0 L606.8 428.1 M638.7 390.0 L638.7 428.1 M617.9 405.9 C621.4 408.1 632.5 417.1 638.7 418.7 C644.8 420.3 651.9 416.0 654.6 415.5 M571.8 415.5 L592.5 415.5 M711.9 316.7 L746.0 315.2 M731.0 304.0 L735.8 330.3 M709.5 343.8 L746.0 343.8 M716.7 364.5 C720.4 368.8 734.1 385.2 739.0 390.0 C743.9 394.8 744.8 392.7 746.0 393.2 M976.0 250.1 C970.9 250.9 956.4 253.8 945.1 254.9 C933.9 255.9 918.3 254.1 908.5 256.5 C898.6 258.8 891.5 264.4 886.2 269.2 C880.9 274.0 878.2 282.5 876.6 285.1 M926.0 211.9 C926.3 217.2 927.6 233.1 927.6 243.7 C927.6 254.3 926.0 265.5 926.0 275.6 C926.0 285.6 927.3 299.3 927.6 304.1 M878.2 274.0 C885.4 273.7 904.9 273.2 921.2 272.4 C937.5 271.6 966.9 269.7 976.0 269.2 M746.0 186.4 C750.0 186.1 761.7 184.2 769.9 184.8 C778.1 185.3 791.1 188.8 795.4 189.6 M761.9 180.0 C762.5 185.3 763.8 201.2 765.1 211.9 C766.4 222.5 769.6 233.1 769.9 243.7 C770.2 254.3 768.6 265.5 766.7 275.6 C764.8 285.6 760.1 299.3 758.7 304.1 M746.0 232.6 C750.5 232.8 763.0 234.7 773.1 234.2 C783.2 233.6 801.0 230.2 806.5 229.4 M746.0 256.5 C750.0 256.2 761.1 256.2 769.9 254.9 C778.7 253.5 793.8 249.6 798.6 248.5 M773.1 234.2 C773.9 238.4 774.9 252.7 777.9 259.6 C780.8 266.5 786.1 272.9 790.6 275.6 C795.1 278.2 802.5 275.6 804.9 275.6 M806.5 242.1 C810.2 241.9 823.3 240.0 828.8 240.5 C834.4 241.1 838.1 244.5 840.0 245.3 M814.5 283.5 L816.1 304.1 M835.2 267.6 L836.8 288.3 M844.8 246.9 C845.3 249.6 844.0 259.1 847.9 262.8 C851.9 266.5 865.2 268.1 868.7 269.2 M806.5 229.4 C809.2 227.8 817.7 224.1 822.5 219.8 C827.2 215.6 833.6 210.0 835.2 203.9 C836.8 197.8 831.0 187.2 832.0 183.2 C833.1 179.2 840.0 180.5 841.6 180.0 M822.5 219.8 C826.2 220.4 838.1 223.0 844.8 223.0 C851.4 223.0 859.4 220.4 862.3 219.8 M835.2 203.9 C838.9 202.8 851.9 198.3 857.5 197.5 C863.1 196.7 866.8 198.8 868.7 199.1 M849.5 184.8 L857.5 197.5 M868.7 250.1 C871.0 249.0 879.5 247.4 883.0 243.7 C886.4 240.0 886.7 232.4 889.4 227.8 C892.0 223.1 897.3 217.8 898.9 215.8 M883.0 243.7 C886.7 243.2 898.1 243.2 905.3 240.5 C912.5 237.9 918.3 229.9 926.0 227.8 C933.7 225.7 947.2 227.8 951.5 227.8 M895.7 189.6 C895.5 193.3 895.2 205.5 894.1 211.9 C893.1 218.2 890.2 225.1 889.4 227.8 M918.0 188.0 L924.4 211.9 M937.1 192.7 C941.9 197.3 959.3 211.9 965.8 219.8 C972.3 227.8 974.3 237.1 976.0 240.5 M953.1 270.8 C954.4 272.9 959.4 278.0 961.0 283.5 C962.6 289.1 962.4 300.7 962.6 304.1 M871.8 281.9 C874.8 280.9 883.3 276.9 889.4 275.6 C895.5 274.2 905.3 274.2 908.5 274.0 M851.1 281.9 C855.4 282.5 871.0 283.0 876.6 285.1 C882.2 287.3 883.3 293.1 884.6 294.7 M746.0 269.2 C748.1 270.0 755.3 272.9 758.7 274.0 C762.2 275.0 765.4 275.3 766.7 275.6 M755.6 304.0 C755.6 319.9 755.6 381.5 755.9 399.6 C756.1 417.6 755.3 407.6 757.2 412.3 C759.0 417.1 765.1 425.5 766.7 428.1 M746.0 324.7 L884.6 326.3 M757.2 335.1 C768.6 335.2 804.4 335.3 825.6 335.9 C846.9 336.4 874.8 337.8 884.6 338.2 M817.7 304.0 C818.2 307.7 818.5 318.3 820.9 326.3 C823.3 334.3 828.6 344.4 832.0 351.8 C835.5 359.2 840.0 367.7 841.6 370.9 M841.6 370.9 L841.6 428.1 M757.2 356.6 L784.2 356.6 M761.9 335.9 C764.6 341.2 774.7 358.2 777.9 367.7 C781.0 377.3 777.6 386.3 781.0 393.2 C784.5 400.1 795.6 406.5 798.6 409.1 M757.2 383.6 L781.0 393.2 M757.2 402.8 C761.9 402.5 778.9 400.1 785.8 401.2 C792.7 402.2 796.4 407.8 798.6 409.1 M862.3 338.2 L862.3 370.1 M883.0 338.2 C886.7 338.4 898.9 336.8 905.3 339.0 C911.7 341.3 917.0 349.9 921.2 351.8 C925.5 353.6 929.2 350.5 930.8 350.2 M871.8 370.1 C874.2 371.6 881.7 377.1 886.2 378.9 C890.7 380.6 894.7 378.1 898.9 380.5 C903.2 382.8 908.5 389.0 911.7 393.2 C914.8 397.4 916.7 400.1 918.0 405.9 C919.4 411.8 919.4 424.4 919.6 428.1 M898.9 380.5 C897.3 384.7 891.5 398.0 889.4 405.9 C887.2 413.9 886.7 424.4 886.2 428.1 M844.8 388.4 C846.9 390.5 852.2 397.4 857.5 401.2 C862.8 404.9 870.0 408.6 876.6 410.7 C883.3 412.8 890.4 414.7 897.3 413.9 C904.2 413.1 911.4 405.1 918.0 405.9 C924.7 406.7 932.4 415.0 937.1 418.7 C941.9 422.4 945.1 426.5 946.7 428.1 M905.3 339.0 L903.7 372.5 M921.2 380.5 C924.7 379.4 936.6 373.6 941.9 374.1 C947.2 374.6 951.2 382.1 953.1 383.6 M941.9 374.1 L945.1 358.2 M953.1 383.6 C952.0 386.8 948.3 395.4 946.7 402.8 C945.1 410.2 944.0 423.9 943.5 428.1 M886.2 319.9 C892.3 319.9 910.9 319.4 922.8 319.9 C934.8 320.5 949.0 320.5 957.9 323.1 C966.7 325.8 973.0 333.7 976.0 335.9 M957.9 308.8 L957.9 357.4 M801.8 415.5 L873.4 421.9 M801.8 415.5 L801.8 428.1 M847.9 304.0 C849.5 305.6 851.4 311.4 857.5 313.6 C863.6 315.7 880.1 316.2 884.6 316.7 M1033.3 246.9 C1037.1 247.4 1047.1 249.8 1055.6 250.1 C1064.1 250.4 1079.5 248.8 1084.3 248.5 M1007.9 227.8 C1010.0 228.8 1016.4 231.0 1020.6 234.2 C1024.8 237.3 1032.0 241.1 1033.3 246.9 C1034.7 252.7 1029.6 264.4 1028.6 269.2 C1027.5 274.0 1033.1 274.4 1027.0 275.6 C1020.9 276.8 1000.4 276.6 991.9 276.4 C983.4 276.1 978.7 274.4 976.0 274.0 M1027.0 275.6 C1029.1 277.2 1034.9 282.7 1039.7 285.1 C1044.5 287.5 1053.0 289.1 1055.6 289.9 M1105.0 219.8 C1107.4 218.5 1114.3 213.3 1119.4 211.9 C1124.4 210.4 1130.0 209.7 1135.3 211.1 C1140.6 212.4 1145.9 217.2 1151.2 219.8 C1156.5 222.5 1163.2 224.2 1167.1 227.0 C1171.1 229.8 1172.7 235.6 1175.1 236.5 C1177.5 237.5 1180.2 235.4 1181.5 232.6 C1182.8 229.8 1185.5 220.8 1183.1 219.8 C1180.7 218.9 1169.8 225.8 1167.1 227.0 M1125.7 221.4 C1126.3 224.6 1126.5 233.6 1128.9 240.5 C1131.3 247.4 1137.7 255.9 1140.1 262.8 C1142.5 269.7 1141.7 277.4 1143.3 281.9 C1144.8 286.5 1144.3 289.9 1149.6 289.9 C1154.9 289.9 1168.5 285.4 1175.1 281.9 C1181.7 278.5 1187.3 273.7 1189.4 269.2 C1191.6 264.7 1185.1 259.6 1187.9 254.9 C1190.6 250.1 1203.0 242.9 1206.0 240.5 M976.0 189.6 L984.0 180.0 M984.0 180.0 C985.8 184.0 991.1 195.9 995.1 203.9 C999.1 211.9 1005.7 223.8 1007.9 227.8 M1052.5 186.4 L1062.0 207.1 M1087.5 189.6 C1089.4 191.4 1096.3 198.3 1098.7 200.7 C1101.0 203.1 1101.3 203.4 1101.8 203.9 M1149.6 289.9 L1154.4 304.1 M1141.7 348.6 C1140.1 350.2 1133.4 354.4 1132.1 358.2 C1130.8 361.9 1132.9 365.6 1133.7 370.9 C1134.5 376.2 1135.3 385.8 1136.9 390.0 C1138.5 394.3 1142.7 393.5 1143.3 396.4 C1143.8 399.3 1143.0 404.4 1140.1 407.5 C1137.1 410.7 1129.2 412.1 1125.7 415.5 C1122.3 418.9 1120.4 426.0 1119.4 428.1 M1133.7 370.9 C1137.4 372.5 1148.0 376.7 1156.0 380.5 C1164.0 384.2 1177.5 388.7 1181.5 393.2 C1185.5 397.7 1181.2 404.1 1179.9 407.5 C1178.6 411.0 1176.4 412.0 1173.5 413.9 C1170.6 415.8 1165.0 416.3 1162.4 418.7 C1159.7 421.0 1158.4 426.5 1157.6 428.1 M1181.5 393.2 L1196.6 386.0 M976.0 351.8 L1009.5 351.8 M984.0 327.9 C983.4 331.9 982.1 345.7 980.8 351.8 C979.5 357.9 976.8 362.4 976.0 364.5 M1009.5 342.2 C1010.8 344.4 1015.6 350.2 1017.4 355.0 C1019.3 359.8 1020.3 366.3 1020.6 370.9 C1020.9 375.5 1019.3 380.9 1019.0 382.8 M1020.6 370.9 L1036.5 358.2 M1020.6 370.9 L1028.6 380.5 M998.3 366.1 L995.1 380.5 M1020.6 386.8 C1019.5 389.5 1015.6 395.9 1014.2 402.8 C1012.9 409.6 1012.9 423.9 1012.6 428.1 M1054.1 390.0 C1055.9 391.6 1061.7 395.3 1065.2 399.6 C1068.7 403.8 1074.8 410.7 1074.8 415.5 C1074.8 420.3 1066.8 426.0 1065.2 428.1 M1074.8 415.5 C1075.8 416.0 1076.4 417.6 1081.1 418.7 C1085.9 419.7 1099.7 421.3 1103.4 421.9 M1206.0 240.5 C1208.7 238.7 1218.5 232.8 1221.9 229.4 C1225.4 225.9 1223.8 222.7 1226.7 219.8 C1229.6 216.9 1235.5 215.3 1239.5 211.9 C1243.4 208.4 1247.4 203.4 1250.6 199.1 C1253.8 194.9 1253.8 189.0 1258.6 186.4 C1263.3 183.7 1275.6 184.2 1279.3 183.2 C1283.0 182.1 1280.6 180.5 1280.9 180.0 M1242.6 180.0 C1243.4 182.4 1245.8 190.4 1247.4 194.3 C1249.0 198.3 1251.4 202.3 1252.2 203.9 M1413.1 251.7 C1414.7 253.8 1419.7 261.5 1422.6 264.4 C1425.5 267.3 1429.3 268.4 1430.6 269.2 M1258.6 353.4 C1258.2 355.8 1256.2 362.1 1256.2 367.7 C1256.2 373.3 1259.0 381.0 1258.6 386.8 C1258.2 392.7 1253.3 395.9 1253.8 402.8 C1254.3 409.6 1260.4 423.9 1261.8 428.1 M1301.6 394.8 C1304.0 394.5 1311.9 396.3 1315.9 393.2 C1319.9 390.1 1318.8 379.9 1325.5 376.5 C1332.1 373.0 1350.4 374.0 1355.7 372.5 C1361.0 371.0 1357.3 370.4 1357.3 367.7 C1357.3 365.1 1351.7 359.6 1355.7 356.6 C1359.7 353.5 1374.8 352.1 1381.2 349.4 C1387.6 346.7 1388.6 343.7 1394.0 340.6 C1399.3 337.6 1408.6 333.7 1413.1 331.1 C1417.6 328.4 1418.1 326.3 1421.0 324.7 C1424.0 323.1 1429.0 322.1 1430.6 321.5 M1357.3 367.7 C1361.3 369.3 1372.5 372.5 1381.2 377.3 C1390.0 382.1 1401.7 390.0 1409.9 396.4 C1418.1 402.8 1427.1 412.3 1430.6 415.5 M1357.3 369.3 C1358.1 371.7 1360.0 378.1 1362.1 383.6 C1364.2 389.2 1369.0 395.4 1370.1 402.8 C1371.1 410.2 1368.7 423.9 1368.5 428.1" fill="none" stroke="#f5c6a8" stroke-width="0.8" stroke-linejoin="round" stroke-linecap="round"/>
<path d="M56.0 252.5 L140.4 276.4 L174.7 289.4 L227.7 288.3 L227.7 284.3 L263.1 283.2 L263.1 280.0 L286.0 275.6 M152.4 282.7 L152.4 304.1 M152.0 304.0 L152.0 428.1 M142.0 350.2 L142.0 358.2 L152.0 358.6 M346.2 180.0 L346.2 271.6 L327.4 272.1 L301.9 273.2 L286.0 276.4 M346.2 248.5 L384.8 249.6 L458.0 250.1 L474.0 275.6 L489.9 304.1 M516.0 323.9 L507.4 329.5 L499.4 343.8 L483.5 351.8 L477.1 366.1 L454.8 382.1 L446.9 388.4 L448.5 399.6 L435.7 409.1 L426.2 407.5 L423.0 415.5 L424.6 428.1 M491.5 304.0 L507.4 329.5 M641.8 180.0 L635.5 189.6 L634.7 203.9 L640.2 216.6 L638.7 223.0 L630.7 220.6 L624.3 221.4 L614.8 231.0 L606.8 238.9 L595.6 246.9 L584.5 262.8 L568.6 274.0 L555.8 285.1 L547.9 297.9 L536.7 304.1 M536.7 304.0 L525.6 313.6 L516.0 321.5 M756.5 180.0 L756.5 304.1 M951.5 180.0 L965.8 186.4 L976.0 197.5 M756.5 304.0 L756.5 428.1 M980.8 204.7 L991.9 210.3 L995.1 219.8 L1004.7 232.6 L1015.8 248.5 L1030.2 258.1 L1042.9 270.8 L1054.1 285.1 L1060.4 289.9 L1074.8 292.3 L1079.5 299.5 L1089.1 304.1 M1206.0 230.2 L1158.4 274.8 L1127.3 304.1 M1158.4 274.8 L1197.4 304.1 L1206.0 310.9 M1128.9 304.0 L1111.4 318.3 L1077.9 350.2 L1071.6 366.1 L1057.2 399.6 L1043.7 428.1 M1087.5 304.0 L1093.9 311.2 L1111.4 318.3 M1260.2 180.0 L1206.0 230.2 M1206.0 310.4 L1231.5 331.1 L1260.2 351.8 L1301.6 382.1 L1362.1 428.1" fill="none" stroke="#94948a" stroke-width="0.7" stroke-linejoin="round" stroke-linecap="round"/>
<path d="M1231.5 331.1 L1227.5 345.4 L1229.9 362.9 L1233.1 370.9 L1226.7 377.3 L1220.3 374.1 L1221.1 383.6 L1228.3 402.8 L1221.9 413.9 L1221.1 428.1" fill="none" stroke="#666" stroke-width="0.7" stroke-linejoin="round" stroke-linecap="round"/>
<path d="M213.7 180.0 C211.8 181.7 211.1 178.7 202.5 190.4 C194.0 202.0 169.4 235.9 162.4 250.1 C155.4 264.3 161.9 266.6 160.3 275.6 C158.8 284.6 154.4 299.3 153.2 304.1 M110.2 347.0 C110.3 349.0 110.4 355.0 111.0 359.0 C111.5 362.9 113.7 364.4 113.3 370.9 C112.9 377.4 111.1 390.0 108.6 398.0 C106.0 405.9 100.3 413.7 98.2 418.7 C96.1 423.7 96.5 426.5 96.1 428.1 M129.3 343.8 C129.5 342.0 129.3 335.9 130.9 332.7 C132.5 329.5 135.6 327.4 138.8 324.7 C142.0 322.1 147.7 320.2 150.0 316.7 C152.2 313.3 152.0 306.1 152.4 304.0 M359.3 321.5 C363.0 322.6 374.7 325.1 381.6 327.9 C388.5 330.7 395.6 334.5 400.7 338.2 C405.7 342.0 409.0 346.7 411.8 350.2 C414.6 353.6 416.6 356.0 417.4 359.0 C418.2 361.9 417.4 365.2 416.6 367.7 C415.8 370.2 412.6 371.3 412.6 374.1 C412.6 376.9 416.7 381.3 416.6 384.4 C416.5 387.6 412.9 390.7 411.8 393.2 C410.8 395.7 410.0 396.4 410.2 399.6 C410.5 402.8 413.0 407.6 413.4 412.3 C413.8 417.1 412.8 425.5 412.6 428.1 M421.4 386.0 C424.0 387.6 429.9 393.5 437.3 395.6 C444.8 397.7 458.0 397.6 466.0 398.8 C474.0 400.0 479.3 402.6 485.1 402.8 C490.9 402.9 495.9 400.4 501.0 399.6 C506.2 398.8 513.5 398.2 516.0 398.0 M443.7 428.1 C447.7 423.3 459.6 408.3 467.6 399.6 C475.6 390.8 486.0 381.1 491.5 375.7 C496.9 370.2 498.4 370.4 500.2 366.9 C502.1 363.5 500.6 358.6 502.6 355.0 C504.6 351.4 510.0 347.5 512.2 345.4 C514.4 343.3 515.4 342.8 516.0 342.2 M1268.1 214.2 C1268.9 216.5 1271.4 222.3 1272.9 227.8 C1274.4 233.2 1274.0 240.3 1276.9 246.9 C1279.8 253.5 1286.6 261.5 1290.4 267.6 C1294.3 273.7 1298.1 277.5 1300.0 283.5 C1301.8 289.6 1301.3 300.7 1301.6 304.1 M1427.4 254.9 C1425.0 257.5 1418.1 267.1 1413.1 270.8 C1408.0 274.5 1403.8 274.2 1397.1 277.2 C1390.5 280.1 1381.2 283.8 1373.3 288.3 C1365.3 292.8 1353.3 301.5 1349.4 304.1 M1349.4 304.0 C1347.5 305.1 1341.7 308.1 1338.2 310.4 C1334.8 312.6 1333.7 314.6 1328.7 317.5 C1323.6 320.5 1315.1 324.4 1307.9 327.9 C1300.8 331.3 1292.0 335.3 1285.6 338.2 C1279.3 341.2 1274.2 342.9 1269.7 345.4 C1265.2 347.9 1265.7 351.1 1258.6 353.4 C1251.4 355.6 1233.3 357.4 1226.7 359.0 C1220.1 360.5 1221.1 359.9 1218.7 362.9 C1216.4 366.0 1213.4 374.9 1212.4 377.3 M1300.8 304.0 C1300.5 306.7 1299.2 309.3 1299.2 319.9 C1299.2 330.5 1300.4 349.7 1300.8 367.7 C1301.2 385.7 1301.4 418.0 1301.6 428.1" fill="none" stroke="#eea784" stroke-width="1" stroke-linejoin="round" stroke-linecap="round"/>
<path d="M668.9 195.9 C671.0 197.1 677.9 201.6 681.7 203.1 C685.4 204.6 689.4 202.4 691.2 204.7 C693.1 206.9 692.4 208.0 692.8 216.6 C693.2 225.3 693.6 244.0 693.6 256.5 C693.6 268.9 692.8 283.6 692.8 291.5 C692.8 299.4 693.5 302.0 693.6 304.1" fill="none" stroke="#eea784" stroke-width="1.5" stroke-linejoin="round" stroke-linecap="round"/>
<path d="M691.2 333.5 C691.3 339.2 691.9 351.9 692.0 367.7 C692.1 383.5 692.0 418.0 692.0 428.1" fill="none" stroke="#eea784" stroke-width="1.4" stroke-linejoin="round" stroke-linecap="round"/>
<path d="M1114.6 184.8 C1114.0 186.1 1113.5 189.6 1111.4 192.7 C1109.3 195.9 1102.9 199.4 1101.8 203.9 C1100.8 208.4 1105.3 215.3 1105.0 219.8 C1104.8 224.3 1102.2 227.9 1100.2 231.0 C1098.3 234.0 1094.3 236.5 1093.1 238.1 C1091.9 239.7 1093.1 238.4 1093.1 240.5 C1093.1 242.7 1092.9 247.2 1093.1 250.9 C1093.2 254.6 1094.8 258.7 1093.9 262.8 C1092.9 266.9 1088.8 271.3 1087.5 275.6 C1086.2 279.8 1087.0 285.5 1085.9 288.3 C1084.8 291.1 1084.6 291.5 1081.1 292.3 C1077.7 293.1 1069.4 293.5 1065.2 293.1 C1061.0 292.7 1057.6 289.6 1055.6 289.9 C1053.7 290.2 1053.7 292.3 1053.3 294.7 C1052.9 297.0 1053.3 302.5 1053.3 304.1 M1062.0 207.1 C1062.1 209.2 1061.7 216.1 1062.8 219.8 C1063.9 223.5 1064.8 227.0 1068.4 229.4 C1072.0 231.8 1080.2 232.7 1084.3 234.2 C1088.4 235.6 1091.6 237.5 1093.1 238.1 M1050.1 304.0 C1049.8 308.0 1049.7 321.8 1048.5 327.9 C1047.3 334.0 1044.9 336.9 1042.9 340.6 C1040.9 344.4 1037.7 344.6 1036.5 350.2 C1035.3 355.8 1034.9 369.0 1035.7 374.1 C1036.5 379.1 1040.4 379.4 1041.3 380.5" fill="none" stroke="#eea784" stroke-width="1.3" stroke-linejoin="round" stroke-linecap="round"/>
<path d="M56.0 339.0 C58.3 338.9 66.2 337.4 69.5 337.9 C72.9 338.5 69.1 340.7 75.9 342.2 C82.7 343.7 100.7 346.3 110.2 347.0 C119.6 347.8 125.6 346.1 132.5 346.7 C139.4 347.3 146.0 350.1 151.6 350.5 C157.1 350.9 161.1 349.0 165.9 348.9 C170.7 348.9 176.0 351.2 180.2 350.2 C184.5 349.2 187.4 344.3 191.4 343.0 C195.4 341.8 199.6 342.2 204.1 342.7 C208.6 343.2 214.1 344.4 218.5 346.2 C222.9 348.0 225.6 353.1 230.4 353.4 C235.2 353.6 242.4 348.9 247.1 347.8 C251.9 346.7 255.4 348.6 259.1 347.0 C262.8 345.4 265.0 340.6 269.4 338.2 C273.9 335.9 283.2 333.6 286.0 332.7 M434.9 259.6 C436.0 258.1 440.0 253.3 441.3 250.1 C442.6 246.9 439.6 243.1 442.9 240.5 C446.2 238.0 456.0 236.1 461.2 235.0 C466.4 233.8 469.4 233.1 474.0 233.4 C478.5 233.6 483.5 236.5 488.3 236.5 C493.1 236.5 498.0 234.2 502.6 233.4 C507.2 232.6 513.8 232.0 516.0 231.8 M348.9 304.1 C350.9 302.0 357.5 295.6 360.9 291.5 C364.2 287.4 365.9 283.3 368.8 279.6 C371.7 275.8 375.2 271.3 378.4 269.2 C381.6 267.1 382.6 267.7 387.9 266.8 C393.3 265.9 404.7 264.7 410.2 263.6 C415.8 262.6 417.3 261.1 421.4 260.4 C425.5 259.8 432.7 259.8 434.9 259.6 M286.0 332.7 C288.7 332.1 296.6 331.2 301.9 329.5 C307.2 327.8 312.5 325.4 317.9 322.3 C323.2 319.3 328.6 314.2 333.8 311.2 C339.0 308.1 346.4 305.2 348.9 304.0 M516.0 235.0 C517.6 235.8 520.2 239.1 525.6 239.7 C530.9 240.4 542.0 237.7 547.9 238.9 C553.7 240.1 556.6 244.2 560.6 246.9 C564.6 249.6 568.0 252.5 571.8 254.9 C575.5 257.3 579.4 259.6 582.9 261.2 C586.4 262.8 588.7 263.5 592.5 264.4 C596.2 265.4 601.0 264.4 605.2 266.8 C609.4 269.2 612.6 275.6 617.9 278.8 C623.3 281.9 630.7 283.8 637.1 285.9 C643.4 288.0 650.9 290.2 656.2 291.5 C661.5 292.8 662.8 293.9 668.9 293.9 C675.0 293.9 684.0 291.8 692.8 291.5 C701.6 291.2 712.6 292.3 721.5 292.3 C730.3 292.3 741.9 291.6 746.0 291.5 M723.1 180.0 C723.3 183.5 725.7 194.6 724.7 200.7 C723.6 206.8 718.8 211.1 716.7 216.6 C714.6 222.2 713.1 227.5 711.9 234.2 C710.7 240.8 709.9 252.7 709.5 256.5 M688.0 333.5 C687.5 335.5 687.0 340.8 684.8 345.4 C682.7 350.1 677.7 356.3 675.3 361.3 C672.9 366.4 672.0 370.8 670.5 375.7 C669.0 380.6 668.4 386.3 666.5 390.8 C664.7 395.3 661.3 398.6 659.4 402.8 C657.4 406.9 655.5 411.3 654.6 415.5 C653.6 419.7 653.9 426.0 653.8 428.1 M795.4 180.0 C795.1 182.7 793.5 191.7 793.8 195.9 C794.1 200.2 794.8 199.9 797.0 205.5 C799.1 211.1 806.3 222.2 806.5 229.4 C806.8 236.5 798.8 240.8 798.6 248.5 C798.3 256.2 803.9 271.1 804.9 275.6 M840.0 245.3 C841.6 243.2 845.8 236.8 849.5 232.6 C853.3 228.3 857.0 225.1 862.3 219.8 C867.6 214.5 875.6 205.5 881.4 200.7 C887.2 195.9 891.2 193.3 897.3 191.2 C903.4 189.0 911.4 187.7 918.0 188.0 C924.7 188.2 930.5 190.1 937.1 192.7 C943.8 195.4 952.5 199.1 957.9 203.9 C963.2 208.7 966.0 218.1 969.0 221.4 C972.0 224.7 974.8 223.4 976.0 223.8 M746.0 281.9 C749.2 283.3 757.9 287.8 765.1 289.9 C772.3 292.0 783.7 292.3 789.0 294.7 C794.3 297.0 795.6 302.5 797.0 304.1 M797.0 304.1 C800.2 302.5 808.1 297.3 816.1 294.7 C824.1 292.1 837.9 288.6 844.8 288.3 C851.7 288.0 854.3 290.5 857.5 293.1 C860.7 295.7 862.8 302.3 863.9 304.1 M863.9 304.0 C866.0 305.1 872.9 307.7 876.6 310.4 C880.3 313.0 882.5 316.7 886.2 319.9 C889.9 323.1 896.3 326.0 898.9 329.5 C901.6 332.9 898.9 338.0 902.1 340.6 C905.3 343.3 913.0 343.8 918.0 345.4 C923.1 347.0 925.7 348.2 932.4 350.2 C939.0 352.2 950.6 355.1 957.9 357.4 C965.1 359.6 973.0 362.7 976.0 363.7 M1199.0 180.0 L1206.0 183.2 M976.0 364.5 C979.7 364.8 992.5 364.3 998.3 366.1 C1004.1 368.0 1007.3 372.9 1011.0 375.7 C1014.8 378.5 1016.4 381.3 1020.6 382.8 C1024.8 384.4 1033.9 384.8 1036.5 385.2 M1206.0 183.2 C1208.7 184.0 1217.4 186.4 1221.9 188.0 C1226.4 189.6 1230.2 190.6 1233.1 192.7 C1236.0 194.9 1236.5 197.8 1239.5 200.7 C1242.4 203.6 1245.6 208.0 1250.6 210.3 C1255.6 212.5 1264.4 213.2 1269.7 214.2 C1275.0 215.3 1273.4 215.8 1282.5 216.6 C1291.5 217.4 1313.3 216.8 1323.9 219.0 C1334.5 221.3 1339.8 226.1 1346.2 230.2 C1352.5 234.3 1357.3 240.5 1362.1 243.7 C1366.9 246.9 1369.5 248.6 1374.8 249.3 C1380.2 250.0 1387.6 247.3 1394.0 247.7 C1400.3 248.1 1407.5 250.5 1413.1 251.7 C1418.6 252.9 1423.6 254.1 1427.4 254.9 C1431.2 255.7 1434.6 256.2 1436.0 256.5" fill="none" stroke="#e8956c" stroke-width="1.6" stroke-linejoin="round" stroke-linecap="round"/>
<path d="M374.4 186.4 C376.7 188.8 383.6 196.2 387.9 200.7 C392.3 205.2 396.7 210.0 400.7 213.5 C404.7 216.9 408.4 218.2 411.8 221.4 C415.3 224.6 419.5 228.8 421.4 232.6 C423.3 236.3 421.9 240.0 423.0 243.7 C424.0 247.4 425.8 252.2 427.8 254.9 C429.8 257.5 432.0 258.1 434.9 259.6 C437.9 261.2 440.9 262.3 445.3 264.4 C449.7 266.5 456.7 269.5 461.2 272.4 C465.7 275.3 469.7 279.3 472.4 281.9 C475.0 284.6 476.3 287.3 477.1 288.3 M664.1 180.0 C664.9 182.7 667.3 190.6 668.9 195.9 C670.5 201.2 672.1 206.0 673.7 211.9 C675.3 217.7 676.6 225.1 678.5 231.0 C680.3 236.8 681.9 242.9 684.8 246.9 C687.8 250.9 692.3 253.3 696.0 254.9 C699.7 256.5 705.3 256.2 707.1 256.5 M735.8 180.0 C736.3 182.1 737.3 189.0 739.0 192.7 C740.7 196.5 744.8 200.7 746.0 202.3" fill="none" stroke="#e8956c" stroke-width="2.2" stroke-linejoin="round" stroke-linecap="round"/>
<path d="M590.9 401.2 C592.7 400.6 598.8 399.6 602.0 398.0 C605.2 396.4 605.2 392.8 610.0 391.6 C614.8 390.4 625.4 391.3 630.7 390.8 C636.0 390.3 638.1 388.6 641.8 388.4 C645.6 388.3 648.9 389.6 653.0 390.0 C657.1 390.4 661.0 390.5 666.5 390.8 C672.1 391.1 681.5 391.3 686.4 391.6 C691.3 391.9 694.4 392.3 696.0 392.4 M696.0 392.4 C695.2 394.7 693.1 400.0 691.2 405.9 C689.4 411.9 685.9 424.4 684.8 428.1 M792.2 293.1 C794.3 290.2 797.0 283.5 804.9 275.6 C812.9 267.6 830.4 251.7 840.0 245.3 C849.5 238.9 856.7 240.0 862.3 237.3 C867.9 234.7 869.4 231.8 873.4 229.4 C877.4 227.0 881.9 225.3 886.2 223.0 C890.4 220.8 894.1 217.8 898.9 215.8 C903.7 213.8 909.5 211.7 914.8 211.1 C920.2 210.4 926.3 210.8 930.8 211.9 C935.3 212.9 938.5 214.8 941.9 217.4 C945.4 220.1 949.4 225.5 951.5 227.8 C953.6 230.0 950.6 231.5 954.7 231.0 C958.8 230.4 972.5 225.7 976.0 224.6 M976.0 226.2 C978.7 226.3 986.6 226.9 991.9 227.0 C997.2 227.1 1001.8 227.7 1007.9 227.0 C1014.0 226.3 1022.7 225.1 1028.6 223.0 C1034.4 220.9 1036.8 216.9 1042.9 214.2 C1049.0 211.6 1057.8 211.2 1065.2 207.1 C1072.6 203.0 1080.3 193.4 1087.5 189.6 C1094.7 185.7 1101.3 184.8 1108.2 184.0 C1115.1 183.2 1121.7 185.2 1128.9 184.8 C1136.1 184.4 1145.6 182.4 1151.2 181.6 C1156.8 180.8 1160.5 180.3 1162.4 180.0" fill="none" stroke="#e8956c" stroke-width="2" stroke-linejoin="round" stroke-linecap="round"/>
<path d="M56.0 366.1 C60.8 365.7 75.6 364.9 84.7 363.7 C93.7 362.5 102.5 360.0 110.2 359.0 C117.9 357.9 124.5 358.0 130.9 357.4 C137.2 356.7 142.3 354.9 148.4 355.0 C154.5 355.1 156.9 357.0 167.5 357.8 C178.1 358.6 201.7 358.8 212.1 359.8 C222.5 360.7 224.3 363.0 229.6 363.7 C234.9 364.5 237.9 364.9 244.0 364.2 C250.1 363.5 259.2 360.6 266.3 359.8 C273.3 358.9 282.7 359.1 286.0 359.0 M403.9 304.1 C408.1 303.0 421.1 300.0 429.4 297.9 C437.6 295.8 446.1 293.4 453.3 291.5 C460.4 289.6 468.4 287.4 472.4 286.7 C476.3 286.1 473.7 287.3 477.1 287.5 C480.6 287.8 486.6 287.8 493.1 288.3 C499.5 288.8 512.2 290.3 516.0 290.7 M286.0 359.0 C289.2 357.7 298.5 353.4 305.1 351.3 C311.8 349.2 320.2 348.1 325.8 346.2 C331.4 344.3 333.8 344.1 338.6 339.8 C343.3 335.6 348.4 325.0 354.5 320.7 C360.6 316.5 367.0 317.1 375.2 314.4 C383.4 311.6 399.1 305.7 403.9 304.0" fill="none" stroke="#e8936a" stroke-width="3" stroke-linejoin="round" stroke-linecap="round"/>
<path d="M611.6 180.0 C610.8 182.7 607.5 190.6 606.8 195.9 C606.1 201.2 608.4 207.3 607.6 211.9 C606.8 216.4 604.0 219.6 602.0 223.0 C600.0 226.5 596.4 228.4 595.6 232.6 C594.8 236.7 595.9 243.4 597.2 247.7 C598.6 251.9 602.3 255.0 603.6 258.1 C604.9 261.1 606.5 262.0 605.2 266.0 C603.9 270.0 597.2 277.2 595.6 281.9 C594.1 286.7 594.6 291.0 595.6 294.7 C596.7 298.4 601.0 302.5 602.0 304.1 M516.0 289.9 C519.5 290.6 529.8 292.2 536.7 293.9 C543.6 295.6 550.2 298.9 557.4 300.3 C564.6 301.7 572.3 301.7 579.7 302.3 C587.1 303.0 598.3 303.8 602.0 304.1 M746.0 218.2 C745.4 220.6 744.7 228.6 742.2 232.6 C739.7 236.5 734.5 239.7 731.0 242.1 C727.6 244.5 724.4 244.8 721.5 246.9 C718.6 249.0 715.2 252.2 713.5 254.9 C711.8 257.5 711.5 261.5 711.1 262.8 M600.4 304.0 C599.6 306.7 597.5 314.1 595.6 319.9 C593.8 325.8 590.5 332.9 589.3 339.0 C588.1 345.1 587.7 350.5 588.5 356.6 C589.3 362.7 593.1 370.1 594.1 375.7 C595.0 381.3 594.6 385.8 594.1 390.0 C593.5 394.3 591.1 396.9 590.9 401.2 C590.6 405.4 591.8 411.0 592.5 415.5 C593.1 420.0 594.4 426.0 594.8 428.1 M600.4 306.4 C604.4 307.3 618.2 309.8 624.3 312.0 C630.4 314.1 632.8 317.7 637.1 319.1 C641.3 320.6 645.6 319.5 649.8 320.7 C654.0 321.9 658.3 324.4 662.5 326.3 C666.8 328.2 671.0 330.7 675.3 331.9 C679.5 333.1 683.8 333.7 688.0 333.5 C692.3 333.2 694.9 330.8 700.8 330.3 C706.6 329.8 715.5 330.1 723.1 330.3 C730.6 330.4 742.2 330.9 746.0 331.1 M711.9 304.0 C711.5 308.4 710.3 321.5 709.5 330.3 C708.7 339.0 709.1 349.0 707.1 356.6 C705.2 364.1 699.6 369.7 697.6 375.7 C695.6 381.7 694.4 387.9 695.2 392.4 C696.0 396.9 700.4 398.9 702.4 402.8 C704.4 406.6 706.9 411.3 707.1 415.5 C707.4 419.7 704.5 426.0 704.0 428.1 M817.7 180.0 C815.8 182.4 810.5 190.4 806.5 194.3 C802.5 198.3 799.1 201.2 793.8 203.9 C788.5 206.5 781.0 207.3 774.7 210.3 C768.3 213.2 760.3 218.6 755.6 221.4 C750.8 224.2 747.6 226.1 746.0 227.0" fill="none" stroke="#e8936a" stroke-width="2.3" stroke-linejoin="round" stroke-linecap="round"/>
<path d="M709.5 256.5 L711.1 304.1" fill="none" stroke="#e8936a" stroke-width="3.4" stroke-linejoin="round" stroke-linecap="round"/>
<path d="M868.7 180.0 C868.7 183.2 869.7 192.5 868.7 199.1 C867.6 205.8 863.3 213.2 862.3 219.8 C861.2 226.5 861.5 231.8 862.3 238.9 C863.1 246.1 865.5 255.7 867.1 262.8 C868.7 270.0 869.2 277.2 871.8 281.9 C874.5 286.7 880.9 287.8 883.0 291.5 C885.1 295.2 884.3 302.0 884.6 304.1 M746.0 330.3 C747.6 329.9 752.9 328.4 755.6 327.9 C758.2 327.4 758.6 326.4 761.9 327.1 C765.2 327.8 771.8 329.1 775.5 331.9 C779.2 334.7 782.8 339.7 784.2 343.8 C785.7 347.9 782.1 352.8 784.2 356.6 C786.4 360.3 790.9 363.6 797.0 366.1 C803.1 368.6 812.9 371.2 820.9 371.7 C828.8 372.2 836.3 369.6 844.8 369.3 C853.3 369.0 866.0 370.1 871.8 370.1 C877.7 370.1 874.8 368.9 879.8 369.3 C884.8 369.7 895.2 370.6 902.1 372.5 C909.0 374.4 916.4 378.5 921.2 380.5 C926.0 382.4 925.5 383.9 930.8 384.4 C936.1 385.0 945.5 383.9 953.1 383.6 C960.6 383.4 972.2 383.0 976.0 382.8 M884.6 304.0 C885.0 306.7 886.7 313.0 887.0 319.9 C887.2 326.8 887.4 338.0 886.2 345.4 C885.0 352.8 882.5 359.8 879.8 364.5 C877.1 369.3 872.9 370.4 870.2 374.1 C867.6 377.8 867.1 384.0 863.9 386.8 C860.7 389.6 856.7 389.9 851.1 390.8 C845.6 391.7 836.3 391.2 830.4 392.4 C824.6 393.6 821.4 395.2 816.1 398.0 C810.8 400.8 803.9 405.1 798.6 409.1 C793.3 413.1 789.0 418.7 784.2 421.9 C779.5 425.0 772.3 427.0 769.9 428.1" fill="none" stroke="#e8936a" stroke-width="2.2" stroke-linejoin="round" stroke-linecap="round"/>
<path d="M976.0 382.8 C978.7 382.8 985.8 382.3 991.9 382.8 C998.0 383.4 1007.3 385.8 1012.6 386.0 C1017.9 386.3 1019.8 384.6 1023.8 384.4 C1027.8 384.3 1032.0 383.6 1036.5 385.2 C1041.0 386.8 1046.6 391.1 1050.9 394.0 C1055.1 396.9 1058.6 399.2 1062.0 402.8 C1065.5 406.3 1068.4 412.0 1071.6 415.5 C1074.8 419.0 1077.4 421.4 1081.1 423.5 C1084.8 425.6 1091.7 427.3 1093.9 428.1" fill="none" stroke="#e8936a" stroke-width="2.4" stroke-linejoin="round" stroke-linecap="round"/>
<text x="114.1" y="349.7" font-size="8.4" fill="none" stroke="#fff" stroke-opacity=".78" stroke-width="1.900" stroke-linejoin="round" textLength="38.7" lengthAdjust="spacing">Villa Rica</text>
<text x="114.1" y="349.7" font-size="8.4" fill="#050505" textLength="38.7" lengthAdjust="spacing">Villa Rica</text>
<text x="271.6" y="213.9" font-size="8.4" fill="none" stroke="#fff" stroke-opacity=".78" stroke-width="1.900" stroke-linejoin="round" textLength="41.6" lengthAdjust="spacing">Sprayberry</text>
<text x="271.6" y="213.9" font-size="8.4" fill="#050505" textLength="41.6" lengthAdjust="spacing">Sprayberry</text>
<text x="280.9" y="222.9" font-size="8.22" fill="none" stroke="#fff" stroke-opacity=".78" stroke-width="1.900" stroke-linejoin="round" textLength="23.3" lengthAdjust="spacing">Farms</text>
<text x="280.9" y="222.9" font-size="8.22" fill="#050505" textLength="23.3" lengthAdjust="spacing">Farms</text>
<text x="373.6" y="184.9" font-size="8.4" fill="none" stroke="#fff" stroke-opacity=".78" stroke-width="1.900" stroke-linejoin="round" textLength="30.6" lengthAdjust="spacing">Springs</text>
<text x="373.6" y="184.9" font-size="8.4" fill="#050505" textLength="30.6" lengthAdjust="spacing">Springs</text>
<text x="387.9" y="266.6" font-size="8.4" fill="none" stroke="#fff" stroke-opacity=".78" stroke-width="1.900" stroke-linejoin="round" textLength="55.8" lengthAdjust="spacing">Lithia Springs</text>
<text x="387.9" y="266.6" font-size="8.4" fill="#050505" textLength="55.8" lengthAdjust="spacing">Lithia Springs</text>
<text x="497.0" y="225.0" font-size="8.4" fill="none" stroke="#fff" stroke-opacity=".78" stroke-width="1.900" stroke-linejoin="round" textLength="36.2" lengthAdjust="spacing">Mableton</text>
<text x="497.0" y="225.0" font-size="8.4" fill="#050505" textLength="36.2" lengthAdjust="spacing">Mableton</text>
<text x="482.7" y="276.2" font-size="8.37" fill="none" stroke="#fff" stroke-opacity=".78" stroke-width="1.900" stroke-linejoin="round" textLength="49.8" lengthAdjust="spacing">Knox Springs</text>
<text x="482.7" y="276.2" font-size="8.37" fill="#050505" textLength="49.8" lengthAdjust="spacing">Knox Springs</text>
<text x="493.3" y="285.0" font-size="8.4" fill="none" stroke="#fff" stroke-opacity=".78" stroke-width="1.900" stroke-linejoin="round" textLength="28.3" lengthAdjust="spacing">Estates</text>
<text x="493.3" y="285.0" font-size="8.4" fill="#050505" textLength="28.3" lengthAdjust="spacing">Estates</text>
<text x="303.5" y="321.7" font-size="8.4" fill="none" stroke="#fff" stroke-opacity=".78" stroke-width="1.900" stroke-linejoin="round" textLength="49.4" lengthAdjust="spacing">Douglasville</text>
<text x="303.5" y="321.7" font-size="8.4" fill="#050505" textLength="49.4" lengthAdjust="spacing">Douglasville</text>
<text x="292.7" y="379.2" font-size="8.38" fill="none" stroke="#fff" stroke-opacity=".78" stroke-width="1.900" stroke-linejoin="round" textLength="56.7" lengthAdjust="spacing">Stewart Woods</text>
<text x="292.7" y="379.2" font-size="8.38" fill="#050505" textLength="56.7" lengthAdjust="spacing">Stewart Woods</text>
<text x="312.3" y="416.1" font-size="8.34" fill="none" stroke="#fff" stroke-opacity=".78" stroke-width="1.900" stroke-linejoin="round" textLength="48.2" lengthAdjust="spacing">Anneewakee</text>
<text x="312.3" y="416.1" font-size="8.34" fill="#050505" textLength="48.2" lengthAdjust="spacing">Anneewakee</text>
<text x="635.5" y="412.4" font-size="8.4" fill="none" stroke="#fff" stroke-opacity=".78" stroke-width="1.900" stroke-linejoin="round" textLength="41.4" lengthAdjust="spacing">East Point</text>
<text x="635.5" y="412.4" font-size="8.4" fill="#050505" textLength="41.4" lengthAdjust="spacing">East Point</text>
<text x="890.6" y="188.1" font-size="8.4" fill="none" stroke="#fff" stroke-opacity=".78" stroke-width="1.900" stroke-linejoin="round" textLength="27.1" lengthAdjust="spacing">Tucker</text>
<text x="890.6" y="188.1" font-size="8.4" fill="#050505" textLength="27.1" lengthAdjust="spacing">Tucker</text>
<text x="757.9" y="218.8" font-size="8.4" fill="none" stroke="#fff" stroke-opacity=".78" stroke-width="1.900" stroke-linejoin="round" textLength="46.2" lengthAdjust="spacing">North Druid</text>
<text x="757.9" y="218.8" font-size="8.4" fill="#050505" textLength="46.2" lengthAdjust="spacing">North Druid</text>
<text x="772.3" y="228.1" font-size="8.4" fill="none" stroke="#fff" stroke-opacity=".78" stroke-width="1.900" stroke-linejoin="round" textLength="17.0" lengthAdjust="spacing">Hills</text>
<text x="772.3" y="228.1" font-size="8.4" fill="#050505" textLength="17.0" lengthAdjust="spacing">Hills</text>
<text x="831.2" y="266.9" font-size="8.4" fill="none" stroke="#fff" stroke-opacity=".78" stroke-width="1.900" stroke-linejoin="round" textLength="37.4" lengthAdjust="spacing">Scottdale</text>
<text x="831.2" y="266.9" font-size="8.4" fill="#050505" textLength="37.4" lengthAdjust="spacing">Scottdale</text>
<text x="817.7" y="322.9" font-size="8.4" fill="none" stroke="#fff" stroke-opacity=".78" stroke-width="1.900" stroke-linejoin="round" textLength="61.8" lengthAdjust="spacing">Belvedere Park</text>
<text x="817.7" y="322.9" font-size="8.4" fill="#050505" textLength="61.8" lengthAdjust="spacing">Belvedere Park</text>
<text x="845.6" y="359.6" font-size="8.4" fill="none" stroke="#fff" stroke-opacity=".78" stroke-width="1.900" stroke-linejoin="round" textLength="33.4" lengthAdjust="spacing">Candler-</text>
<text x="845.6" y="359.6" font-size="8.4" fill="#050505" textLength="33.4" lengthAdjust="spacing">Candler-</text>
<text x="847.9" y="368.8" font-size="8.4" fill="none" stroke="#fff" stroke-opacity=".78" stroke-width="1.900" stroke-linejoin="round" textLength="30.3" lengthAdjust="spacing">McAfee</text>
<text x="847.9" y="368.8" font-size="8.4" fill="#050505" textLength="30.3" lengthAdjust="spacing">McAfee</text>
<text x="841.6" y="413.7" font-size="8.4" fill="none" stroke="#fff" stroke-opacity=".78" stroke-width="1.900" stroke-linejoin="round" textLength="36.6" lengthAdjust="spacing">Tamarack</text>
<text x="841.6" y="413.7" font-size="8.4" fill="#050505" textLength="36.6" lengthAdjust="spacing">Tamarack</text>
<text x="967.4" y="203.7" font-size="8.4" fill="none" stroke="#fff" stroke-opacity=".78" stroke-width="1.900" stroke-linejoin="round" textLength="58.0" lengthAdjust="spacing">Mountain Park</text>
<text x="967.4" y="203.7" font-size="8.4" fill="#050505" textLength="58.0" lengthAdjust="spacing">Mountain Park</text>
<text x="1098.6" y="183.6" font-size="8.4" fill="none" stroke="#fff" stroke-opacity=".78" stroke-width="1.900" stroke-linejoin="round" textLength="36.7" lengthAdjust="spacing">Snellville</text>
<text x="1098.6" y="183.6" font-size="8.4" fill="#050505" textLength="36.7" lengthAdjust="spacing">Snellville</text>
<text x="1225.1" y="208.5" font-size="8.4" fill="none" stroke="#fff" stroke-opacity=".78" stroke-width="1.900" stroke-linejoin="round" textLength="41.1" lengthAdjust="spacing">Loganville</text>
<text x="1225.1" y="208.5" font-size="8.4" fill="#050505" textLength="41.1" lengthAdjust="spacing">Loganville</text>
<text x="1382.0" y="332.5" font-size="8.39" fill="none" stroke="#fff" stroke-opacity=".78" stroke-width="1.900" stroke-linejoin="round" textLength="24.7" lengthAdjust="spacing">Alcovy</text>
<text x="1382.0" y="332.5" font-size="8.39" fill="#050505" textLength="24.7" lengthAdjust="spacing">Alcovy</text>
<text x="1377.7" y="341.1" font-size="8.14" fill="none" stroke="#fff" stroke-opacity=".78" stroke-width="1.900" stroke-linejoin="round" textLength="33.5" lengthAdjust="spacing">Mountain</text>
<text x="1377.7" y="341.1" font-size="8.14" fill="#050505" textLength="33.5" lengthAdjust="spacing">Mountain</text>
<text x="1102.6" y="431.6" font-size="8.4" fill="none" stroke="#fff" stroke-opacity=".78" stroke-width="1.900" stroke-linejoin="round" textLength="32.7" lengthAdjust="spacing">Conyers</text>
<text x="1102.6" y="431.6" font-size="8.4" fill="#050505" textLength="32.7" lengthAdjust="spacing">Conyers</text>
<text x="952.5" y="342.5" font-size="8.31" fill="none" stroke="#fff" stroke-opacity=".78" stroke-width="1.900" stroke-linejoin="round" textLength="24.5" lengthAdjust="spacing">Redan</text>
<text x="952.5" y="342.5" font-size="8.31" fill="#050505" textLength="24.5" lengthAdjust="spacing">Redan</text>
<text x="876.6" y="296.3" font-size="8.9" fill="none" stroke="#fff" stroke-opacity=".78" stroke-width="1.900" stroke-linejoin="round" textLength="28.7" lengthAdjust="spacing">DeKalb</text>
<text x="876.6" y="296.3" font-size="8.9" fill="#7a7a76" textLength="28.7" lengthAdjust="spacing">DeKalb</text>
<text x="1416.3" y="283.1" font-size="8.7" fill="none" stroke="#fff" stroke-opacity=".78" stroke-width="1.900" stroke-linejoin="round" textLength="50.7" lengthAdjust="spacing">Walnut Grove</text>
<text x="1416.3" y="283.1" font-size="8.7" fill="#7a7a76" textLength="50.7" lengthAdjust="spacing">Walnut Grove</text>
<defs><path id="rp1" d="M589.5 267.5 Q 613 286 652.5 291.500"/><path id="rp2" d="M695.2 279.5 L695.2 218"/><path id="rp3" d="M864.3 239.8 L875.3 231.9 L887.8 225.5 L900.3 218.500 L915.700 213.900 L931 214.600 L946 219"/><path id="rp4" d="M755.5 357 L759.5 418"/><path id="rp5" d="M1283 219 L1325 222.5"/><path id="rp6" d="M1393.5 250 L1440 257"/><path id="rp7" d="M69.5 200.5 L113 189"/><path id="rp8" d="M501 359 L570.500 297"/><path id="rp9" d="M595 362.5 Q 628 364 651 353"/><path id="rp10" d="M840.5 213.5 L875 196"/><path id="rp11" d="M946 271 Q 968 278.5 993 279.5"/><path id="rp12" d="M1184.5 226.5 L1189.5 188"/><path id="rp13" d="M1144.5 349.5 Q 1157 328 1160 303.500"/><path id="rp14" d="M1274.500 251 L1298.5 284.5"/><path id="rp15" d="M1347.5 305 L1401 278"/><path id="rp16" d="M1287.5 340.5 L1329 320"/><path id="rp17" d="M1254 389 Q 1255.500 410 1262 436"/><path id="rp18" d="M1303.800 449.500 L1303.800 408.500"/></defs>
<text font-size="7.1" fill="none" stroke="#f3ecd0" stroke-opacity=".75" stroke-width="1.800" stroke-linejoin="round" font-weight="bold" textLength="67.0" lengthAdjust="spacing"><textPath href="#rp1">Bankhead Hwy NW</textPath></text>
<text font-size="7.1" fill="#5b2c14" font-weight="bold" textLength="67.0" lengthAdjust="spacing"><textPath href="#rp1">Bankhead Hwy NW</textPath></text>
<text font-size="7.1" fill="none" stroke="#f3ecd0" stroke-opacity=".75" stroke-width="1.800" stroke-linejoin="round" font-weight="bold" textLength="61.0" lengthAdjust="spacing"><textPath href="#rp2">Northside Dr NW</textPath></text>
<text font-size="7.1" fill="#5b2c14" font-weight="bold" textLength="61.0" lengthAdjust="spacing"><textPath href="#rp2">Northside Dr NW</textPath></text>
<text font-size="7.1" fill="none" stroke="#f3ecd0" stroke-opacity=".75" stroke-width="1.800" stroke-linejoin="round" font-weight="bold" textLength="76.0" lengthAdjust="spacing"><textPath href="#rp3">Stone Mountain Fwy</textPath></text>
<text font-size="7.1" fill="#5b2c14" font-weight="bold" textLength="76.0" lengthAdjust="spacing"><textPath href="#rp3">Stone Mountain Fwy</textPath></text>
<text font-size="7.1" fill="none" stroke="#f3ecd0" stroke-opacity=".75" stroke-width="1.800" stroke-linejoin="round" font-weight="bold" textLength="61.0" lengthAdjust="spacing"><textPath href="#rp4">Moreland Ave SE</textPath></text>
<text font-size="7.1" fill="#5b2c14" font-weight="bold" textLength="61.0" lengthAdjust="spacing"><textPath href="#rp4">Moreland Ave SE</textPath></text>
<text font-size="7.1" fill="none" stroke="#f3ecd0" stroke-opacity=".75" stroke-width="1.800" stroke-linejoin="round" font-weight="bold" textLength="42.0" lengthAdjust="spacing"><textPath href="#rp5">Highway 78</textPath></text>
<text font-size="7.1" fill="#5b2c14" font-weight="bold" textLength="42.0" lengthAdjust="spacing"><textPath href="#rp5">Highway 78</textPath></text>
<text font-size="7.1" fill="none" stroke="#f3ecd0" stroke-opacity=".75" stroke-width="1.800" stroke-linejoin="round" font-weight="bold" textLength="42.0" lengthAdjust="spacing"><textPath href="#rp6">Highway 78</textPath></text>
<text font-size="7.1" fill="#5b2c14" font-weight="bold" textLength="42.0" lengthAdjust="spacing"><textPath href="#rp6">Highway 78</textPath></text>
<text font-size="7.2" fill="#9b9b92" textLength="44.0" lengthAdjust="spacing"><textPath href="#rp7">Buchanan Hwy</textPath></text>
<text font-size="7.2" fill="#9b9b92" textLength="93.0" lengthAdjust="spacing"><textPath href="#rp8">Fulton Industrial Blvd SW</textPath></text>
<text font-size="7.2" fill="#9b9b92" textLength="56.0" lengthAdjust="spacing"><textPath href="#rp9">Cascade Rd SW</textPath></text>
<text font-size="7.2" fill="#9b9b92" textLength="38.5" lengthAdjust="spacing"><textPath href="#rp10">Lavista Rd</textPath></text>
<text font-size="7.2" fill="#9b9b92" textLength="47.0" lengthAdjust="spacing"><textPath href="#rp11">Rockbridge Rd</textPath></text>
<text font-size="7.2" fill="#9b9b92" textLength="38.5" lengthAdjust="spacing"><textPath href="#rp12">Rosebud Rd</textPath></text>
<text font-size="7.2" fill="#9b9b92" textLength="47.5" lengthAdjust="spacing"><textPath href="#rp13">Highway 20 NE</textPath></text>
<text font-size="7.2" fill="#9b9b92" textLength="41.0" lengthAdjust="spacing"><textPath href="#rp14">Highway 81</textPath></text>
<text font-size="7.2" fill="#9b9b92" textLength="60.0" lengthAdjust="spacing"><textPath href="#rp15">Highway 138 NW</textPath></text>
<text font-size="7.2" fill="#9b9b92" textLength="46.0" lengthAdjust="spacing"><textPath href="#rp16">Highway 138</textPath></text>
<text font-size="7.2" fill="#9b9b92" textLength="47.0" lengthAdjust="spacing"><textPath href="#rp17">Gum Creek Rd</textPath></text>
<text font-size="7.2" fill="#9b9b92" textLength="41.0" lengthAdjust="spacing"><textPath href="#rp18">Highway 81</textPath></text>
<g transform="translate(212.1 352.4)"><path d="M.3 1.200C2.500 .2 5.300 .2 7.900 1C10.500 .2 13.300 .2 15.500 1.200C15.900 8.300 13.300 12.300 7.900 14.100C2.500 12.300 -.1 8.300 .3 1.200Z" fill="#5c86ad" stroke="#fff" stroke-width=".9"/><path d="M.3 1.200C2.500 .2 5.300 .2 7.900 1C10.500 .2 13.300 .2 15.500 1.200L15.600 3.700L.2 3.700Z" fill="#dc4a4c"/><path d="M.2 3.900H15.600" stroke="#fff" stroke-width=".5"/><text x="7.900" y="10.800" font-size="6.8" fill="#fff" text-anchor="middle">20</text></g>
<g transform="translate(587.7 233.2)"><path d="M.3 1.200C2.500 .2 5.300 .2 7.900 1C10.500 .2 13.300 .2 15.500 1.200C15.900 8.300 13.300 12.300 7.900 14.100C2.500 12.300 -.1 8.300 .3 1.200Z" fill="#5c86ad" stroke="#fff" stroke-width=".9"/><path d="M.3 1.200C2.500 .2 5.300 .2 7.900 1C10.500 .2 13.300 .2 15.500 1.200L15.600 3.700L.2 3.700Z" fill="#dc4a4c"/><path d="M.2 3.900H15.600" stroke="#fff" stroke-width=".5"/><text x="7.900" y="10.800" font-size="6.2" fill="#fff" text-anchor="middle">285</text></g>
<g transform="translate(661.7 318.5)"><path d="M.3 1.200C2.500 .2 5.300 .2 7.900 1C10.500 .2 13.300 .2 15.500 1.200C15.900 8.300 13.300 12.300 7.900 14.100C2.500 12.300 -.1 8.300 .3 1.200Z" fill="#5c86ad" stroke="#fff" stroke-width=".9"/><path d="M.3 1.200C2.500 .2 5.300 .2 7.900 1C10.500 .2 13.300 .2 15.500 1.200L15.600 3.700L.2 3.700Z" fill="#dc4a4c"/><path d="M.2 3.900H15.600" stroke="#fff" stroke-width=".5"/><text x="7.900" y="10.800" font-size="6.8" fill="#fff" text-anchor="middle">20</text></g>
<g transform="translate(761.5 319.2)"><path d="M.3 1.200C2.500 .2 5.300 .2 7.900 1C10.500 .2 13.300 .2 15.500 1.200C15.900 8.300 13.300 12.300 7.900 14.100C2.500 12.300 -.1 8.300 .3 1.200Z" fill="#5c86ad" stroke="#fff" stroke-width=".9"/><path d="M.3 1.200C2.500 .2 5.300 .2 7.900 1C10.500 .2 13.300 .2 15.500 1.200L15.600 3.700L.2 3.700Z" fill="#dc4a4c"/><path d="M.2 3.900H15.600" stroke="#fff" stroke-width=".5"/><text x="7.900" y="10.800" font-size="6.8" fill="#fff" text-anchor="middle">20</text></g>
<g transform="translate(797.8 394.6)"><path d="M.3 1.200C2.500 .2 5.300 .2 7.900 1C10.500 .2 13.300 .2 15.500 1.200C15.900 8.300 13.300 12.300 7.900 14.100C2.500 12.300 -.1 8.300 .3 1.200Z" fill="#5c86ad" stroke="#fff" stroke-width=".9"/><path d="M.3 1.200C2.500 .2 5.300 .2 7.900 1C10.500 .2 13.300 .2 15.500 1.200L15.600 3.700L.2 3.700Z" fill="#dc4a4c"/><path d="M.2 3.900H15.600" stroke="#fff" stroke-width=".5"/><text x="7.900" y="10.800" font-size="6.2" fill="#fff" text-anchor="middle">285</text></g>
<g transform="translate(1038.1 380.8)"><path d="M.3 1.200C2.500 .2 5.300 .2 7.900 1C10.500 .2 13.300 .2 15.500 1.200C15.900 8.300 13.300 12.300 7.900 14.100C2.500 12.300 -.1 8.300 .3 1.200Z" fill="#5c86ad" stroke="#fff" stroke-width=".9"/><path d="M.3 1.200C2.500 .2 5.300 .2 7.900 1C10.500 .2 13.300 .2 15.500 1.200L15.600 3.700L.2 3.700Z" fill="#dc4a4c"/><path d="M.2 3.900H15.600" stroke="#fff" stroke-width=".5"/><text x="7.900" y="10.800" font-size="6.8" fill="#fff" text-anchor="middle">20</text></g>
<rect x="410.2" y="374.1" width="12.3" height="10.3" fill="#fff" stroke="#8a8a8a" stroke-width=".8"/><text x="416.4" y="381.9" font-size="7.600" fill="#111" text-anchor="middle">92</text>
<rect x="504.2" y="391.8" width="9.3" height="10.8" fill="#fff" stroke="#8a8a8a" stroke-width=".8"/><text x="508.9" y="399.9" font-size="7.600" fill="#111" text-anchor="middle">6</text>
<rect x="556.6" y="389.7" width="15.2" height="9.9" fill="#fff" stroke="#8a8a8a" stroke-width=".8"/><text x="564.2" y="397.3" font-size="7.600" fill="#111" text-anchor="middle">154</text>
<rect x="1084.6" y="240.8" width="15.6" height="10.4" fill="#fff" stroke="#8a8a8a" stroke-width=".8"/><text x="1092.4" y="248.7" font-size="7.600" fill="#111" text-anchor="middle">124</text>
<rect x="1043.6" y="299.0" width="15.2" height="10.4" fill="#fff" stroke="#8a8a8a" stroke-width=".8"/><text x="1051.2" y="306.9" font-size="7.600" fill="#111" text-anchor="middle">124</text>
<rect x="1196.5" y="377.7" width="15.9" height="10.3" fill="#fff" stroke="#8a8a8a" stroke-width=".8"/><text x="1204.5" y="385.6" font-size="7.600" fill="#111" text-anchor="middle">138</text>
<g transform="translate(708.0 246.6)"><circle r="12.2" fill="#a8a8a0" fill-opacity=".82" stroke="#333" stroke-width="1"/><path d="M-3.900 -6.300V6.600" stroke="#fff" stroke-width="3.400"/><path d="M-3.400 -5.900C-1 -7 1.300 -4.500 5.500 -5.600V1C1.300 2.100 -1 -.4 -3.400 .7Z" fill="#111" stroke="#fff" stroke-width="1.500" stroke-linejoin="round"/><path d="M-3.900 -6.300V6.600" stroke="#111" stroke-width="1.700"/><path d="M-3.400 -5.900C-1 -7 1.300 -4.500 5.500 -5.600V1C1.300 2.100 -1 -.4 -3.400 .7Z" fill="#111"/></g>
<g transform="translate(755.7 279.4)"><circle r="12.2" fill="#f8b445" fill-opacity=".82" stroke="#3a2a10" stroke-width="1"/><path d="M-3.900 -6.300V6.600" stroke="#fff" stroke-width="3.400"/><path d="M-3.400 -5.900C-1 -7 1.300 -4.500 5.500 -5.600V1C1.300 2.100 -1 -.4 -3.400 .7Z" fill="#111" stroke="#fff" stroke-width="1.500" stroke-linejoin="round"/><path d="M-3.900 -6.300V6.600" stroke="#111" stroke-width="1.700"/><path d="M-3.400 -5.900C-1 -7 1.300 -4.500 5.500 -5.600V1C1.300 2.100 -1 -.4 -3.400 .7Z" fill="#111"/></g>
<g transform="translate(709.1 294.6)"><circle r="12.2" fill="#8cc87c" fill-opacity=".82" stroke="#25401f" stroke-width="1"/><path d="M-3.900 -6.300V6.600" stroke="#fff" stroke-width="3.400"/><path d="M-3.400 -5.900C-1 -7 1.300 -4.500 5.500 -5.600V1C1.300 2.100 -1 -.4 -3.400 .7Z" fill="#111" stroke="#fff" stroke-width="1.500" stroke-linejoin="round"/><path d="M-3.900 -6.300V6.600" stroke="#111" stroke-width="1.700"/><path d="M-3.400 -5.900C-1 -7 1.300 -4.500 5.500 -5.600V1C1.300 2.100 -1 -.4 -3.400 .7Z" fill="#111"/></g>
<g transform="translate(698.1 314.6)"><circle r="12.2" fill="#8cc87c" fill-opacity=".82" stroke="#25401f" stroke-width="1"/><path d="M-3.900 -6.300V6.600" stroke="#fff" stroke-width="3.400"/><path d="M-3.400 -5.900C-1 -7 1.300 -4.500 5.500 -5.600V1C1.300 2.100 -1 -.4 -3.400 .7Z" fill="#111" stroke="#fff" stroke-width="1.500" stroke-linejoin="round"/><path d="M-3.900 -6.300V6.600" stroke="#111" stroke-width="1.700"/><path d="M-3.400 -5.900C-1 -7 1.300 -4.500 5.500 -5.600V1C1.300 2.100 -1 -.4 -3.400 .7Z" fill="#111"/></g>
<g transform="translate(719.2 335.4)"><circle r="12.2" fill="#8cc87c" fill-opacity=".82" stroke="#25401f" stroke-width="1"/><path d="M-3.900 -6.300V6.600" stroke="#fff" stroke-width="3.400"/><path d="M-3.400 -5.900C-1 -7 1.300 -4.500 5.500 -5.600V1C1.300 2.100 -1 -.4 -3.400 .7Z" fill="#111" stroke="#fff" stroke-width="1.500" stroke-linejoin="round"/><path d="M-3.900 -6.300V6.600" stroke="#111" stroke-width="1.700"/><path d="M-3.400 -5.900C-1 -7 1.300 -4.500 5.500 -5.600V1C1.300 2.100 -1 -.4 -3.400 .7Z" fill="#111"/></g>
<g transform="translate(839.5 340.3)"><circle r="12.2" fill="#8cc87c" fill-opacity=".82" stroke="#25401f" stroke-width="1"/><path d="M-3.900 -6.300V6.600" stroke="#fff" stroke-width="3.400"/><path d="M-3.400 -5.900C-1 -7 1.300 -4.500 5.500 -5.600V1C1.300 2.100 -1 -.4 -3.400 .7Z" fill="#111" stroke="#fff" stroke-width="1.500" stroke-linejoin="round"/><path d="M-3.900 -6.300V6.600" stroke="#111" stroke-width="1.700"/><path d="M-3.400 -5.900C-1 -7 1.300 -4.500 5.500 -5.600V1C1.300 2.100 -1 -.4 -3.400 .7Z" fill="#111"/></g>
<g transform="translate(964.7 339.4)"><circle r="12.2" fill="#f8b445" fill-opacity=".82" stroke="#3a2a10" stroke-width="1"/><path d="M-3.900 -6.300V6.600" stroke="#fff" stroke-width="3.400"/><path d="M-3.400 -5.900C-1 -7 1.300 -4.500 5.500 -5.600V1C1.300 2.100 -1 -.4 -3.400 .7Z" fill="#111" stroke="#fff" stroke-width="1.500" stroke-linejoin="round"/><path d="M-3.900 -6.300V6.600" stroke="#111" stroke-width="1.700"/><path d="M-3.400 -5.900C-1 -7 1.300 -4.500 5.500 -5.600V1C1.300 2.100 -1 -.4 -3.400 .7Z" fill="#111"/></g>
<g transform="translate(710.1 414.1)"><circle r="12.2" fill="#f8b445" fill-opacity=".82" stroke="#3a2a10" stroke-width="1"/><path d="M-3.900 -6.300V6.600" stroke="#fff" stroke-width="3.400"/><path d="M-3.400 -5.900C-1 -7 1.300 -4.500 5.500 -5.600V1C1.300 2.100 -1 -.4 -3.400 .7Z" fill="#111" stroke="#fff" stroke-width="1.500" stroke-linejoin="round"/><path d="M-3.900 -6.300V6.600" stroke="#111" stroke-width="1.700"/><path d="M-3.400 -5.900C-1 -7 1.300 -4.500 5.500 -5.600V1C1.300 2.100 -1 -.4 -3.400 .7Z" fill="#111"/></g>
<text x="690.4" y="327.2" font-size="11.2" fill="none" stroke="#fff" stroke-opacity=".78" stroke-width="1.900" stroke-linejoin="round" textLength="40.6" lengthAdjust="spacing" font-weight="bold" opacity=".9">Atlanta</text>
<text x="690.4" y="327.2" font-size="11.2" fill="#111" textLength="40.6" lengthAdjust="spacing" font-weight="bold" opacity=".9">Atlanta</text>
</svg></div><!--endmap-->
<div id="zoomctl">
  <svg class="abs" style="left:0;top:0" width="24" height="48" viewBox="0 0 24 48" stroke="#6a6a6a" stroke-width="1.100" fill="none"><path d="M6 11.600h11.600M11.800 5.800v11.600M6 35.600h11.600"/><path d="M0 24h24" stroke="#e4e4e4"/></svg>
</div>
<div id="collapse"><svg class="abs" style="left:15px;top:9px" width="7.500" height="4" viewBox="0 0 8 4"><path d="M0 4h8L4 0z" fill="#555"/></svg></div>

<div class="pill" style="left:1223.400px;width:90.200px"><div class="n" style="background:#ff9800">41</div><div class="t" style="letter-spacing:-0.27px;left:36.900px">ACTIVE</div></div>
<div class="pill" style="left:1319.600px;width:92.900px"><div class="n" style="background:#6c757d">13</div><div class="t" style="letter-spacing:-0.52px;left:36.200px">CLOSED</div></div>

<!-- TABLE -->
<div id="tbl">
<div class="th" style="left:4px;letter-spacing:0.164px">Tracking #</div>
<svg class="sort" style="left:67.4px" viewBox="0 0 7.600 10.600"><path d="M0 4.600h7.600L3.800 .3z" fill="#c8c8c8"/><path d="M0 6h7.600L3.800 10.300z" fill="#c8c8c8"/></svg>
<div class="th" style="left:112px;letter-spacing:0.190px">Mission Name</div>
<svg class="sort" style="left:197.6px" viewBox="0 0 7.600 10.600"><path d="M0 4.600h7.600L3.800 .3z" fill="#c8c8c8"/><path d="M0 6h7.600L3.800 10.300z" fill="#c8c8c8"/></svg>
<div class="th" style="left:354.5px;letter-spacing:0.078px">Originator</div>
<svg class="sort" style="left:414.2px" viewBox="0 0 7.600 10.600"><path d="M0 4.600h7.600L3.800 .3z" fill="#c8c8c8"/><path d="M0 6h7.600L3.800 10.300z" fill="#c8c8c8"/></svg>
<div class="th" style="left:538px;letter-spacing:0.099px">Assigned To</div>
<svg class="sort" style="left:611.2px" viewBox="0 0 7.600 10.600"><path d="M0 4.600h7.600L3.800 .3z" fill="#c8c8c8"/><path d="M0 6h7.600L3.800 10.300z" fill="#c8c8c8"/></svg>
<div class="th" style="left:713px;letter-spacing:0.175px">Priority</div>
<svg class="sort" style="left:757.7px" viewBox="0 0 7.600 10.600"><path d="M0 4.600h7.600L3.800 .3z" fill="#c8c8c8"/><path d="M0 6h7.600L3.800 10.300z" fill="#c8c8c8"/></svg>
<div class="th" style="left:853.5px;letter-spacing:-0.068px">Time Due</div>
<svg class="sort" style="left:910.8px" viewBox="0 0 7.600 10.600"><path d="M0 4.600h7.600L3.800 .3z" fill="#c8c8c8"/><path d="M0 6h7.600L3.800 10.300z" fill="#c8c8c8"/></svg>
<div class="th" style="left:1034px;letter-spacing:0.113px">Status</div>
<svg class="sort" style="left:1073.5px" viewBox="0 0 7.600 10.600"><path d="M0 4.600h7.600L3.800 .3z" fill="#c8c8c8"/><path d="M0 6h7.600L3.800 10.300z" fill="#c8c8c8"/></svg>
<div class="th" style="left:1138.5px;letter-spacing:0.012px">Last Updated</div>
<svg class="abs" style="left:1217px;top:13px" width="8" height="4" viewBox="0 0 8 4"><path d="M0 0h8L4 4z" fill="#333"/></svg>
<div class="row r-d" style="top:25.2px"><span class="c1" style="letter-spacing:-0.026px">2105-0008</span><span class="c2" style="letter-spacing:-0.093px">Generator needed @ Stadium</span><span class="c3" style="letter-spacing:-0.225px">CMD EOC Director</span><span class="c4" style="letter-spacing:-0.079px">Education - Finance</span><b class="bdg p gy" style="width:83.8px;letter-spacing:-0.108px">ROUTINE (24 HRS.)</b><span class="c6" style="letter-spacing:0.167px">10/13/2022 08:17:00</span><b class="bdg s gy" style="width:56.6px;letter-spacing:-0.245px">COMPLETE</b><span class="c8" style="letter-spacing:0.167px">06/27/2024 13:40:14</span><em class="dots"><i></i></em></div>
<div class="row r-w" style="top:51px"><span class="c1" style="letter-spacing:-0.026px">2203-0003</span><span class="c2" style="letter-spacing:-0.154px">PPE For Benet Hall</span><span class="c3" style="letter-spacing:-0.079px">Education - Finance</span><span class="c4" style="letter-spacing:0.026px">Education - Logistics</span><b class="bdg p or" style="width:85.5px;letter-spacing:-0.085px">PRIORITY (12 HRS.)</b><span class="c6" style="letter-spacing:0.167px">05/03/2023 00:50:00</span><i class="al"></i><b class="bdg s gn" style="width:65px;letter-spacing:-0.346px">IN PROGRESS</b><span class="c8" style="letter-spacing:0.167px">05/02/2023 12:50:12</span><em class="dots"><i></i></em></div>
<div class="row r-g" style="top:76.8px"><span class="c1" style="letter-spacing:-0.026px">2301-0001</span><span class="c2" style="letter-spacing:-0.148px">Sand Bag</span><span class="c3" style="letter-spacing:-0.139px">Education - EOC Director</span><span class="c4" style="letter-spacing:-0.139px">Education - EOC Director</span><b class="bdg p or" style="width:83.8px;letter-spacing:-0.108px">ROUTINE (24 HRS.)</b><span class="c6" style="letter-spacing:0.167px">01/18/2023 13:40:00</span><i class="al"></i><b class="bdg s gn" style="width:65px;letter-spacing:-0.346px">IN PROGRESS</b><span class="c8" style="letter-spacing:0.167px">01/17/2023 13:43:53</span><em class="dots"><i></i></em></div>
<div class="row r-w" style="top:102.6px"><span class="c1" style="letter-spacing:-0.026px">2208-0001</span><span class="c2" style="letter-spacing:-0.093px">Sandbags</span><span class="c3" style="letter-spacing:-0.139px">Education - EOC Director</span><span class="c4" style="letter-spacing:-0.139px">Education - EOC Director</span><b class="bdg p or" style="width:85.5px;letter-spacing:-0.085px">PRIORITY (12 HRS.)</b><span class="c6" style="letter-spacing:0.167px">10/14/2022 02:39:00</span><i class="al"></i><b class="bdg s gn" style="width:65px;letter-spacing:-0.346px">IN PROGRESS</b><span class="c8" style="letter-spacing:0.248px">10/13/2022 11:55:11</span><em class="dots"><i></i></em></div>
<div class="row r-d" style="top:128.4px"><span class="c1" style="letter-spacing:-0.026px">2203-0001</span><span class="c2" style="letter-spacing:-0.093px">Sandbags</span><span class="c3" style="letter-spacing:-0.139px">Education - EOC Director</span><span class="c4" style="letter-spacing:-0.260px">Gov - CMD EOC Director</span><b class="bdg p gy" style="width:85.5px;letter-spacing:-0.085px">PRIORITY (12 HRS.)</b><span class="c6" style="letter-spacing:0.167px">10/13/2022 21:42:00</span><b class="bdg s gy" style="width:56.6px;letter-spacing:-0.245px">COMPLETE</b><span class="c8" style="letter-spacing:0.248px">10/13/2022 11:55:11</span><em class="dots"><i></i></em></div>
<div class="row r-w" style="top:154.2px"><span class="c1" style="letter-spacing:-0.026px">2106-0001</span><span class="c2" style="letter-spacing:-0.133px">Synergy Report</span><span class="c3" style="letter-spacing:-0.139px">Education - EOC Director</span><span class="c4" style="letter-spacing:-0.139px">Education - EOC Director</span><b class="bdg p rd" style="width:88.4px;letter-spacing:-0.024px">IMMEDIATE (4 HRS.)</b><span class="c6" style="letter-spacing:0.167px">10/16/2022 01:22:00</span><i class="al"></i><b class="bdg s gn" style="width:65px;letter-spacing:-0.346px">IN PROGRESS</b><span class="c8" style="letter-spacing:0.248px">10/13/2022 11:55:11</span><em class="dots"><i></i></em></div>
<div class="row r-g" style="top:180px"><span class="c1" style="letter-spacing:-0.026px">2105-0007</span><span class="c2" style="letter-spacing:-0.053px">Update the JAS</span><span class="c3" style="letter-spacing:-0.225px">CMD EOC Director</span><span class="c4" style="letter-spacing:-0.079px">Education - Finance</span><b class="bdg p rd" style="width:88.4px;letter-spacing:-0.024px">IMMEDIATE (4 HRS.)</b><span class="c6" style="letter-spacing:0.167px">10/16/2022 01:47:00</span><i class="al"></i><b class="bdg s or" style="width:53.3px;letter-spacing:-0.354px">ASSIGNED</b><span class="c8" style="letter-spacing:0.248px">10/13/2022 11:55:11</span><em class="dots"><i></i></em></div>
<div class="row r-w" style="top:205.8px"><span class="c1" style="letter-spacing:-0.026px">2105-0006</span><span class="c2" style="letter-spacing:-0.637px">PPE</span><span class="c3" style="letter-spacing:-0.225px">CMD EOC Director</span><span class="c4" style="letter-spacing:-0.139px">Education - EOC Director</span><b class="bdg p or" style="width:83.8px;letter-spacing:-0.108px">ROUTINE (24 HRS.)</b><span class="c6" style="letter-spacing:0.167px">10/14/2022 19:40:00</span><i class="al"></i><b class="bdg s gn" style="width:65px;letter-spacing:-0.346px">IN PROGRESS</b><span class="c8" style="letter-spacing:0.248px">10/13/2022 11:55:11</span><em class="dots"><i></i></em></div>
<div class="row r-d" style="top:231.6px"><span class="c1" style="letter-spacing:-0.026px">2105-0005</span><span class="c2" style="letter-spacing:-0.093px">Sandbags</span><span class="c3" style="letter-spacing:-0.225px">CMD EOC Director</span><span class="c4" style="letter-spacing:-0.049px">Education - Operations</span><b class="bdg p gy" style="width:88.4px;letter-spacing:-0.024px">IMMEDIATE (4 HRS.)</b><span class="c6" style="letter-spacing:0.167px">10/13/2022 21:42:00</span><b class="bdg s gy" style="width:56.6px;letter-spacing:-0.245px">COMPLETE</b><span class="c8" style="letter-spacing:0.248px">10/13/2022 11:55:11</span><em class="dots"><i></i></em></div>
<div class="row r-w" style="top:257.4px"><span class="c1" style="letter-spacing:-0.026px">2105-0004</span><span class="c2" style="letter-spacing:-0.012px">Firefighting Crew</span><span class="c3" style="letter-spacing:-0.225px">CMD EOC Director</span><span class="c4" style="letter-spacing:-0.079px">Education - Finance</span><b class="bdg p rd" style="width:88.4px;letter-spacing:-0.024px">IMMEDIATE (4 HRS.)</b><span class="c6" style="letter-spacing:0.167px">10/16/2022 01:13:00</span><i class="al"></i><b class="bdg s or" style="width:53.3px;letter-spacing:-0.354px">ASSIGNED</b><span class="c8" style="letter-spacing:0.248px">10/13/2022 11:55:11</span><em class="dots"><i></i></em></div>
<div class="row r-g" style="top:283.2px"></div>
</div>

<div id="sb"><div class="thumb"></div>
  <svg class="abs" style="left:2.800px;top:5.500px" width="5.600" height="3" viewBox="0 0 8 4"><path d="M0 4h8L4 0z" fill="#7d7d7d"/></svg>
  <svg class="abs" style="left:2.800px;top:606.500px" width="5.600" height="3" viewBox="0 0 8 4"><path d="M0 0h8L4 4z" fill="#505050"/></svg>
</div>

<!-- FOOTER -->
<div id="footer">
  <svg class="abs" style="left:18.3px;top:11.500px" width="7.800" height="10" viewBox="0 0 7.800 10" fill="#1e7fd6"><rect x="0" y="0" width="1.900" height="10"/><path d="M7.800 0v10L2.300 5z"/></svg>
  <svg class="abs" style="left:47px;top:11.500px" width="10" height="10" viewBox="0 0 10 10" fill="#2f95ea"><path d="M10 0v10L0 5z"/></svg>
  <div class="pg">Page 1 of 3</div>
  <svg class="abs" style="left:142.500px;top:11.500px" width="10" height="10" viewBox="0 0 10 10" fill="#1e7fd6"><path d="M0 0v10L10 5z"/></svg>
  <svg class="abs" style="left:172.500px;top:11.500px" width="7.800" height="10" viewBox="0 0 7.800 10" fill="#1e7fd6"><rect x="5.900" y="0" width="1.900" height="10"/><path d="M0 0v10L5.500 5z"/></svg>
  <div class="cb"></div>
  <div class="dr">Disable Refresh?</div>
  <div class="cp">©2024 ESi Acquisition, Inc. WebEOC</div>
</div>

</div>
</body>
</html>
